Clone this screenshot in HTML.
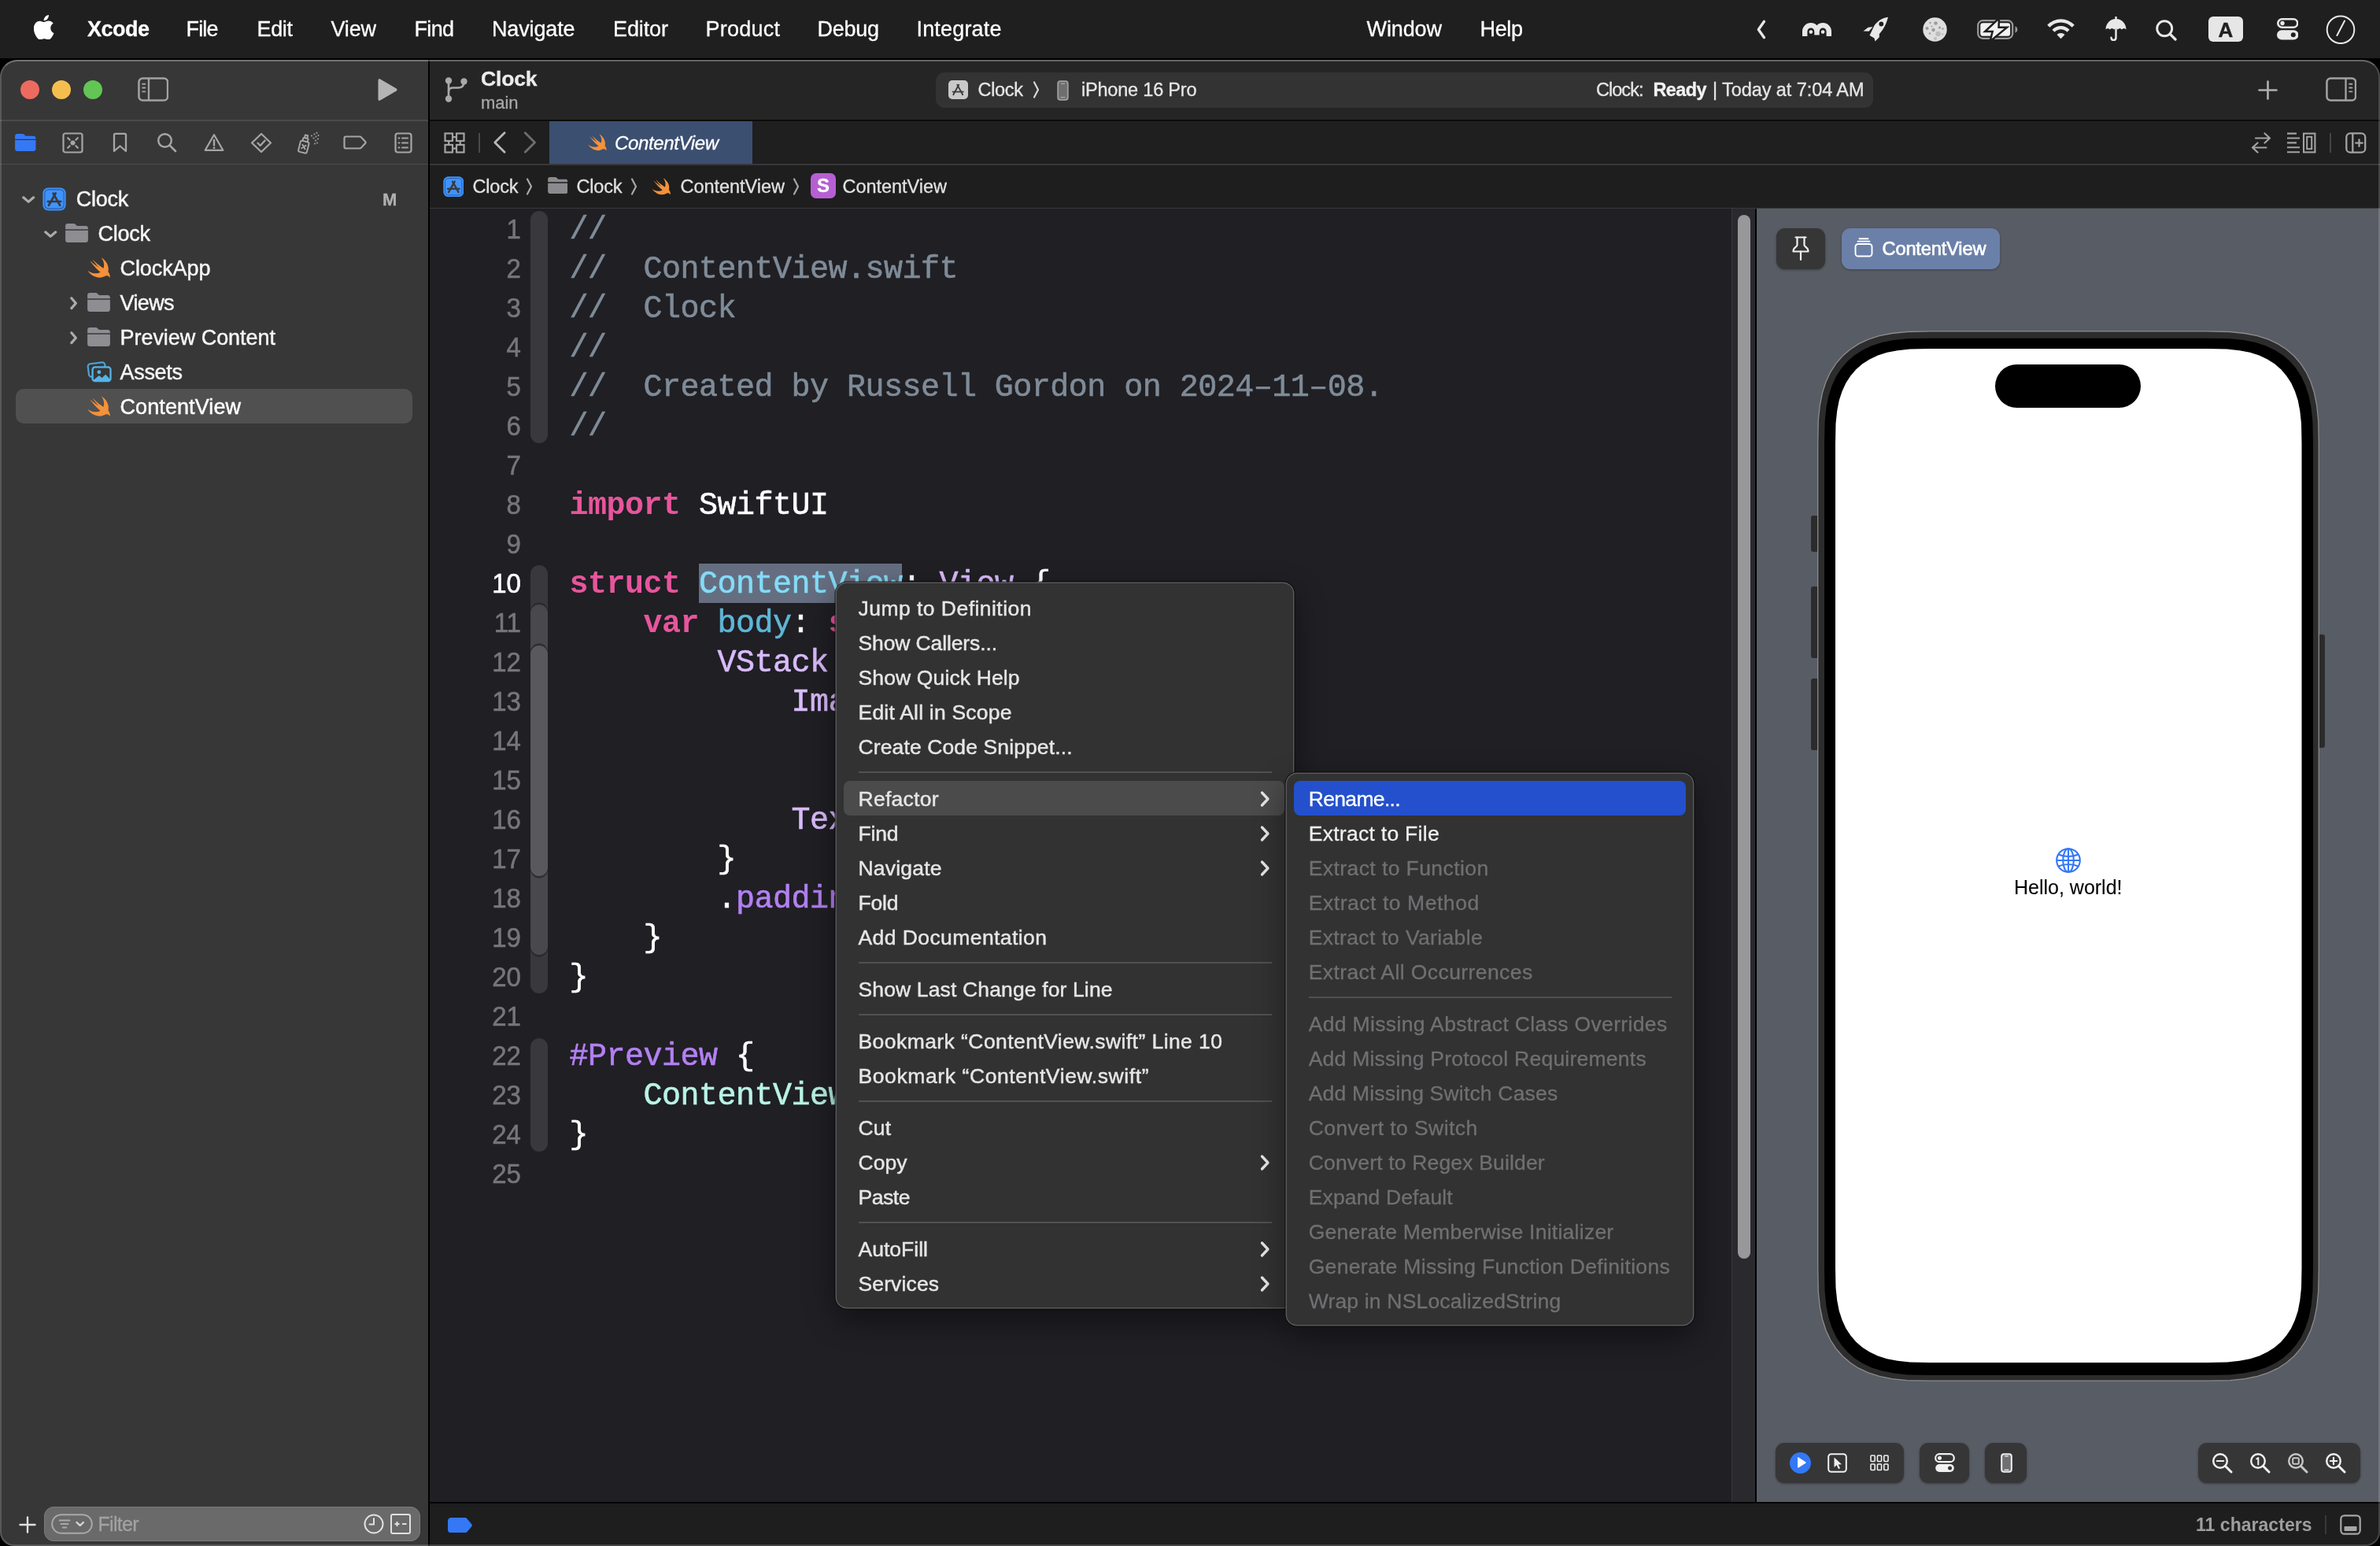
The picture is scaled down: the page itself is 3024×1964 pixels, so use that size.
<!DOCTYPE html>
<html><head><meta charset="utf-8"><title>Xcode</title>
<style>
html,body{margin:0;padding:0;}
body{width:3024px;height:1964px;background:#000;overflow:hidden;position:relative;font-family:"Liberation Sans",sans-serif;}
#win{position:absolute;left:0;top:76px;width:3024px;height:1888px;border-radius:22px 22px 18px 18px;overflow:hidden;background:#1f1f24;}
#win>.in{will-change:transform;position:absolute;left:0;top:-76px;width:3024px;height:1964px;}
#edge{position:absolute;left:0;top:76px;width:3024px;height:1888px;border-radius:22px 22px 18px 18px;box-sizing:border-box;border:2px solid rgba(255,255,255,.17);border-top:2px solid rgba(255,255,255,.30);pointer-events:none;}
#gs{position:absolute;left:0;top:0;width:3024px;height:1964px;will-change:transform;}
</style></head><body>
<div id="gs">
<div style="position:absolute;left:0.0px;top:0.0px;width:3024.0px;height:73.5px;background:#1f1f1f;"></div>
<svg style="position:absolute;left:43.2px;top:18.8px;" width="26.0" height="31.5" viewBox="2.5 0 19.5 24"><path d="M12.152 6.896c-.948 0-2.415-1.078-3.96-1.04-2.04.027-3.91 1.183-4.961 3.014-2.117 3.675-.546 9.103 1.519 12.09 1.013 1.454 2.208 3.09 3.792 3.039 1.52-.065 2.09-.987 3.935-.987 1.831 0 2.35.987 3.96.948 1.637-.026 2.676-1.48 3.676-2.948 1.156-1.688 1.636-3.325 1.662-3.415-.039-.013-3.182-1.221-3.22-4.857-.026-3.04 2.48-4.494 2.597-4.559-1.429-2.09-3.623-2.324-4.39-2.376-2-.156-3.675 1.09-4.61 1.09zM15.53 3.83c.843-1.012 1.4-2.427 1.245-3.83-1.207.052-2.662.805-3.532 1.818-.78.896-1.454 2.338-1.273 3.714 1.338.104 2.715-.688 3.559-1.701" fill="#fff"/></svg>
<div style="position:absolute;left:111.0px;top:18.5px;height:37px;line-height:37px;font-family:'Liberation Sans',sans-serif;font-size:27.00px;font-weight:700;color:#fff;white-space:pre;letter-spacing:-0.507px;-webkit-text-stroke:0.30px #fff;">Xcode</div>
<div style="position:absolute;left:236.5px;top:18.5px;height:37px;line-height:37px;font-family:'Liberation Sans',sans-serif;font-size:27.00px;font-weight:400;color:#fff;white-space:pre;letter-spacing:-0.835px;-webkit-text-stroke:0.30px #fff;">File</div>
<div style="position:absolute;left:326.5px;top:18.5px;height:37px;line-height:37px;font-family:'Liberation Sans',sans-serif;font-size:27.00px;font-weight:400;color:#fff;white-space:pre;letter-spacing:-0.342px;-webkit-text-stroke:0.30px #fff;">Edit</div>
<div style="position:absolute;left:420.5px;top:18.5px;height:37px;line-height:37px;font-family:'Liberation Sans',sans-serif;font-size:27.00px;font-weight:400;color:#fff;white-space:pre;letter-spacing:-0.178px;-webkit-text-stroke:0.30px #fff;">View</div>
<div style="position:absolute;left:526.5px;top:18.5px;height:37px;line-height:37px;font-family:'Liberation Sans',sans-serif;font-size:27.00px;font-weight:400;color:#fff;white-space:pre;letter-spacing:-0.675px;-webkit-text-stroke:0.30px #fff;">Find</div>
<div style="position:absolute;left:625.0px;top:18.5px;height:37px;line-height:37px;font-family:'Liberation Sans',sans-serif;font-size:27.00px;font-weight:400;color:#fff;white-space:pre;letter-spacing:-0.152px;-webkit-text-stroke:0.30px #fff;">Navigate</div>
<div style="position:absolute;left:779.0px;top:18.5px;height:37px;line-height:37px;font-family:'Liberation Sans',sans-serif;font-size:27.00px;font-weight:400;color:#fff;white-space:pre;letter-spacing:-0.107px;-webkit-text-stroke:0.30px #fff;">Editor</div>
<div style="position:absolute;left:896.5px;top:18.5px;height:37px;line-height:37px;font-family:'Liberation Sans',sans-serif;font-size:27.00px;font-weight:400;color:#fff;white-space:pre;letter-spacing:0.242px;-webkit-text-stroke:0.30px #fff;">Product</div>
<div style="position:absolute;left:1038.5px;top:18.5px;height:37px;line-height:37px;font-family:'Liberation Sans',sans-serif;font-size:27.00px;font-weight:400;color:#fff;white-space:pre;letter-spacing:-0.266px;-webkit-text-stroke:0.30px #fff;">Debug</div>
<div style="position:absolute;left:1164.5px;top:18.5px;height:37px;line-height:37px;font-family:'Liberation Sans',sans-serif;font-size:27.00px;font-weight:400;color:#fff;white-space:pre;letter-spacing:0.178px;-webkit-text-stroke:0.30px #fff;">Integrate</div>
<div style="position:absolute;left:1736.5px;top:18.5px;height:37px;line-height:37px;font-family:'Liberation Sans',sans-serif;font-size:27.00px;font-weight:400;color:#fff;white-space:pre;letter-spacing:-0.106px;-webkit-text-stroke:0.30px #fff;">Window</div>
<div style="position:absolute;left:1880.5px;top:18.5px;height:37px;line-height:37px;font-family:'Liberation Sans',sans-serif;font-size:27.00px;font-weight:400;color:#fff;white-space:pre;letter-spacing:-0.343px;-webkit-text-stroke:0.30px #fff;">Help</div>
<svg style="position:absolute;left:2231.0px;top:24.5px;" width="14.0" height="25.0" viewBox="0 0 14 25"><path d="M10.500 2.300 3.300 12.500 10.500 22.700" fill="none" stroke="#e8e8e8" stroke-width="3.300" stroke-linecap="round" stroke-linejoin="round"/></svg>
<svg style="position:absolute;left:2289.5px;top:28.5px;" width="37.0" height="17.0" viewBox="0 0 37 17"><g fill="none" stroke="#e8e8e8" stroke-width="6.400"><path d="M3.200 17V10.900a7.650 7.650 0 0 1 15.300 0V15.500"/><path d="M18.500 10.900a7.650 7.650 0 0 1 15.300 0V17"/></g><circle cx="10.900" cy="11.600" r="2.300" fill="#e8e8e8"/><circle cx="26.100" cy="11.600" r="2.300" fill="#e8e8e8"/></svg>
<svg style="position:absolute;left:2367.0px;top:21.0px;" width="33.0" height="32.0" viewBox="0 0 33 32"><path d="M32 .800C24.500 1.800 18.800 5.500 14.500 11.500L8.500 24l6 3.500C22 22 28.500 14.500 32 .800z" fill="#e8e8e8"/><path d="M12.500 13.200 6.800 13.800.500 18.500l7 .300z" fill="#e8e8e8"/><path d="M17.500 24.200 20.800 21v5.200l-5.300 5.300-1.200-4.800z" fill="#e8e8e8"/><circle cx="23.300" cy="9.500" r="2.900" fill="#1f1f1f"/></svg>
<svg style="position:absolute;left:2442.5px;top:22.0px;" width="31.0" height="31.0" viewBox="0 0 31 31"><circle cx="15.500" cy="15.500" r="15.200" fill="#dedede"/><g fill="#9c9c9c"><circle cx="16.500" cy="7.500" r="2.300"/><circle cx="9.500" cy="7" r="1.200"/><circle cx="5.500" cy="14" r="2"/><circle cx="13.500" cy="16" r="2.200"/><circle cx="21.500" cy="13" r="1.600"/><circle cx="25.500" cy="14.500" r="1.200"/><circle cx="9" cy="20.500" r="1.200"/><circle cx="11.500" cy="11.500" r="1"/></g><g fill="#bdbdbd"><circle cx="19.500" cy="21" r="3.200"/><circle cx="16" cy="27" r="2"/><circle cx="25" cy="21.500" r="1.200"/></g></svg>
<svg style="position:absolute;left:2511.5px;top:24.5px;" width="53.0" height="25.0" viewBox="0 0 53 25"><rect x="1.200" y="1.200" width="44" height="22.600" rx="6" fill="none" stroke="#9a9a9a" stroke-width="2.200"/><rect x="4.300" y="4.300" width="37.800" height="16.400" rx="3" fill="#f2f2f2"/><path d="M48.500 8.300c1.800.700 2.800 2.200 2.800 4.200s-1 3.500-2.800 4.200z" fill="#9a9a9a"/><path d="M26.600 1.200 13.300 13.700H21.300L18.600 24.200 34.700 10.900H26.300z" fill="#f2f2f2" stroke="#1f1f1f" stroke-width="5" stroke-linejoin="miter" paint-order="stroke"/></svg>
<svg style="position:absolute;left:2600.5px;top:24.0px;" width="35.0" height="25.5" viewBox="0 0 35 25.500"><g fill="none" stroke="#e8e8e8" stroke-width="4.300"><path d="M1.800 9.300C6 4.800 11.500 2.300 17.500 2.300s11.500 2.500 15.700 7"/><path d="M8 15.300c2.500-2.700 5.800-4.200 9.500-4.200s7 1.500 9.500 4.200"/></g><path d="M17.500 25.300l-5-5.200c1.300-1.400 3-2.200 5-2.200s3.700.800 5 2.200z" fill="#e8e8e8"/></svg>
<svg style="position:absolute;left:2674.5px;top:20.5px;" width="27.0" height="31.5" viewBox="0 0 27 31.500"><path d="M13.500 .800v3" stroke="#e8e8e8" stroke-width="2.400" stroke-linecap="round"/><path d="M.500 16.500C.500 9 6 3 13.500 3s13 6 13 13.500c-1.700-2-3.800-2-5.500 0-1.600-2-3.600-2-5.200 0-1.600-2.100-3.200-2.100-4.800 0-1.600-2-3.600-2-5.200 0-1.600-2-3.600-2-5.300 0z" fill="#e8e8e8"/><path d="M13.500 14v12.500c0 2-1.200 3.500-3 3.500s-3-1.300-3-3.200" fill="none" stroke="#e8e8e8" stroke-width="2.400" stroke-linecap="round"/></svg>
<svg style="position:absolute;left:2738.5px;top:24.5px;" width="27.0" height="27.0" viewBox="0 0 27 27"><circle cx="11.200" cy="11.200" r="9.500" fill="none" stroke="#e8e8e8" stroke-width="2.900"/><path d="M18.300 18.300 25 25" stroke="#e8e8e8" stroke-width="3.300" stroke-linecap="round"/></svg>
<div style="position:absolute;left:2806.0px;top:21.0px;width:44.0px;height:32.0px;background:#e6e6e6;border-radius:6px;"></div>
<div style="position:absolute;left:2806.0px;top:19.5px;height:36px;line-height:36px;font-family:'Liberation Sans',sans-serif;font-size:26.00px;font-weight:700;color:#1f1f1f;white-space:pre;-webkit-text-stroke:0.40px #1f1f1f;width:44px;text-align:center;">A</div>
<svg style="position:absolute;left:2892.5px;top:23.0px;" width="27.5" height="27.5" viewBox="0 0 27.500 27.500"><rect x="1.300" y="1.300" width="24.900" height="10.400" rx="5.200" fill="none" stroke="#e8e8e8" stroke-width="2.600"/><circle cx="7" cy="6.500" r="2.700" fill="#e8e8e8"/><rect x="0" y="15.200" width="27.500" height="12.300" rx="6.150" fill="#e8e8e8"/><circle cx="20.800" cy="21.350" r="3" fill="#1f1f1f"/></svg>
<svg style="position:absolute;left:2955.0px;top:18.5px;" width="38.0" height="37.5" viewBox="0 0 38 37.500"><circle cx="19" cy="18.750" r="17.300" fill="none" stroke="#e8e8e8" stroke-width="2"/><path d="M24 7.500 14.400 26" stroke="#e8e8e8" stroke-width="2" stroke-linecap="round"/></svg>
</div>
<div id="win"><div class="in">
<div style="position:absolute;left:0.0px;top:76.0px;width:545.0px;height:1888.0px;background:#373737;"></div>
<div style="position:absolute;left:546.0px;top:76.0px;width:2478.0px;height:77.0px;background:#252525;"></div>
<div style="position:absolute;left:544.0px;top:76.0px;width:2.0px;height:1888.0px;background:#000;"></div>
<div style="position:absolute;left:546.0px;top:152.0px;width:2478.0px;height:2.0px;background:#0c0c0c;"></div>
<div style="position:absolute;left:0.0px;top:152.0px;width:544.0px;height:1.5px;background:#4b4b4b;"></div>
<div style="position:absolute;left:0.0px;top:207.5px;width:544.0px;height:1.5px;background:#4b4b4b;"></div>
<div style="position:absolute;left:26.0px;top:102.0px;width:24.0px;height:24.0px;background:#ed6a5e;border-radius:50%;"></div>
<div style="position:absolute;left:66.0px;top:102.0px;width:24.0px;height:24.0px;background:#f4be4f;border-radius:50%;"></div>
<div style="position:absolute;left:106.0px;top:102.0px;width:24.0px;height:24.0px;background:#62c554;border-radius:50%;"></div>
<svg style="position:absolute;left:174.5px;top:97.5px;" width="39.5" height="31.0" viewBox="0 0 41 32"><rect x="1.5" y="1.5" width="38" height="29" rx="5" fill="none" stroke="#a3a3a3" stroke-width="2.6"/><path d="M14.5 2v28" stroke="#a3a3a3" stroke-width="2.4"/><path d="M5.500 9h5M5.500 14h5M5.500 19h5" stroke="#a3a3a3" stroke-width="2" /></svg>
<svg style="position:absolute;left:478.0px;top:99.0px;" width="29.0" height="30.0" viewBox="0 0 29 30"><path d="M2.500 2.800v24.400c0 1.400 1.400 2.100 2.600 1.400l20.600-12.200c1.100-.7 1.100-2.100 0-2.800L5.100 1.400C3.900.7 2.500 1.400 2.500 2.800z" fill="#b4b4b4"/></svg>
<svg style="position:absolute;left:564.0px;top:96.0px;" width="32.0" height="36.0" viewBox="0 0 32 36"><g fill="none" stroke="#a9a9a9" stroke-width="2.600" stroke-linecap="round"><path d="M6 8v20"/><path d="M6 20c0-3 2-4.500 6-4.500h6c4 0 7-2 7-6"/></g><circle cx="6" cy="6.500" r="4.200" fill="#a9a9a9"/><circle cx="6" cy="29.500" r="4.200" fill="#a9a9a9"/><circle cx="25.500" cy="7.500" r="4.200" fill="#a9a9a9"/></svg>
<div style="position:absolute;left:611.0px;top:82.0px;height:37px;line-height:37px;font-family:'Liberation Sans',sans-serif;font-size:26.50px;font-weight:700;color:#ececec;white-space:pre;letter-spacing:-0.166px;-webkit-text-stroke:0.30px #ececec;">Clock</div>
<div style="position:absolute;left:611.0px;top:115.5px;height:30px;line-height:30px;font-family:'Liberation Sans',sans-serif;font-size:22.00px;font-weight:400;color:#a8a8a8;white-space:pre;letter-spacing:-0.062px;-webkit-text-stroke:0.30px #a8a8a8;">main</div>
<div style="position:absolute;left:1189.0px;top:92.0px;width:1191.0px;height:44.5px;background:#333334;border-radius:11px;"></div>
<div style="position:absolute;left:1205.0px;top:101.5px;width:24.5px;height:24.5px;background:#c9c9c9;border-radius:5px;"></div>
<svg style="position:absolute;left:1205.0px;top:101.5px;" width="24.5" height="24.5" viewBox="0 0 24 24"><g stroke="#3a3a3a" stroke-width="1.800" stroke-linecap="round" fill="none"><path d="M12.900 5.600 7.200 16"/><path d="M11.100 5.600 16.800 16"/><path d="M5.600 14.300h12.800"/><path d="M6.200 17.800l.8-1.400"/><path d="M17.800 17.800l-.8-1.400"/></g></svg>
<div style="position:absolute;left:1242.5px;top:98.0px;height:32px;line-height:32px;font-family:'Liberation Sans',sans-serif;font-size:23.50px;font-weight:400;color:#e6e6e6;white-space:pre;letter-spacing:-0.315px;-webkit-text-stroke:0.30px #e6e6e6;">Clock</div>
<svg style="position:absolute;left:1312.0px;top:102.0px;" width="9.0" height="24.0" viewBox="0 0 9 24"><path d="M2 2.500 7 12 2 21.500" fill="none" stroke="#d8d8d8" stroke-width="2.200" stroke-linecap="round" stroke-linejoin="round"/></svg>
<svg style="position:absolute;left:1342.7px;top:101.5px;" width="15.0" height="26.0" viewBox="0 0 15 26"><rect x="1.200" y="1.200" width="12.600" height="23.600" rx="3" fill="#6e6e6e" stroke="#a0a0a0" stroke-width="1.800"/><path d="M5.500 4.300h4M5 21.700h5" stroke="#a8a8a8" stroke-width="1.300" stroke-linecap="round"/></svg>
<div style="position:absolute;left:1374.0px;top:98.0px;height:32px;line-height:32px;font-family:'Liberation Sans',sans-serif;font-size:23.50px;font-weight:400;color:#e6e6e6;white-space:pre;letter-spacing:-0.203px;-webkit-text-stroke:0.30px #e6e6e6;">iPhone 16 Pro</div>
<div style="position:absolute;left:2028.0px;top:98.0px;height:32px;line-height:32px;font-family:'Liberation Sans',sans-serif;font-size:23.50px;font-weight:400;color:#e6e6e6;white-space:pre;letter-spacing:-0.970px;-webkit-text-stroke:0.30px #e6e6e6;">Clock: </div>
<div style="position:absolute;left:2100.5px;top:98.0px;height:32px;line-height:32px;font-family:'Liberation Sans',sans-serif;font-size:23.50px;font-weight:700;color:#f2f2f2;white-space:pre;letter-spacing:-0.634px;-webkit-text-stroke:0.30px #f2f2f2;">Ready</div>
<div style="position:absolute;left:2176.0px;top:98.0px;height:32px;line-height:32px;font-family:'Liberation Sans',sans-serif;font-size:23.50px;font-weight:400;color:#e6e6e6;white-space:pre;letter-spacing:-0.076px;-webkit-text-stroke:0.30px #e6e6e6;">| Today at 7:04 AM</div>
<svg style="position:absolute;left:2869.0px;top:101.5px;" width="25.0" height="25.0" viewBox="0 0 25 25"><path d="M12.500 1.500v22M1.500 12.500h22" stroke="#b0b0b0" stroke-width="2.600" stroke-linecap="round"/></svg>
<svg style="position:absolute;left:2954.5px;top:97.5px;" width="39.5" height="31.0" viewBox="0 0 41 32"><rect x="1.500" y="1.500" width="38" height="29" rx="5" fill="none" stroke="#a3a3a3" stroke-width="2.600"/><path d="M26.500 2v28" stroke="#a3a3a3" stroke-width="2.400"/><path d="M30.500 9h5M30.500 14h5M30.500 19h5" stroke="#a3a3a3" stroke-width="2"/></svg>
<div style="position:absolute;left:546.0px;top:154.0px;width:2478.0px;height:54.0px;background:#1f1f1f;"></div>
<div style="position:absolute;left:546.0px;top:208.0px;width:2478.0px;height:2.0px;background:#38383a;"></div>
<div style="position:absolute;left:698.0px;top:154.0px;width:258.0px;height:54.0px;background:#3b4f70;"></div>
<svg style="position:absolute;left:747.0px;top:169.5px;" width="24.0" height="22.0" viewBox="2.3 3.2 18.6 16.9"><defs><linearGradient id="sg5398" x1="0" y1="0" x2="0" y2="1"><stop offset="0" stop-color="#f8a34a"/><stop offset="1" stop-color="#f58a33"/></linearGradient></defs><path d="M13.543 3.41c4.114 2.47 6.545 7.162 5.549 11.131-.024.093-.05.181-.076.272l.002.001c2.062 2.538 1.5 5.258 1.236 4.745-1.072-2.086-3.066-1.568-4.088-1.043a6.803 6.803 0 0 1-.281.158l-.02.012-.002.002c-2.115 1.123-4.957 1.205-7.812-.022a12.568 12.568 0 0 1-5.64-4.838c.649.48 1.35.902 2.097 1.252 3.019 1.414 6.051 1.311 8.197-.002C9.651 12.73 7.101 9.67 5.146 7.191a10.628 10.628 0 0 1-1.005-1.384c2.34 2.142 6.038 4.83 7.365 5.576C8.69 8.408 6.208 4.743 6.324 4.86c4.436 4.47 8.528 6.996 8.528 6.996.154.085.27.154.36.213.085-.215.16-.437.224-.668.708-2.588-.09-5.548-1.893-7.992z" fill="#f5913a"/></svg>
<div style="position:absolute;left:781.0px;top:164.5px;height:33px;line-height:33px;font-family:'Liberation Sans',sans-serif;font-size:24.00px;font-weight:400;font-style:italic;color:#fff;white-space:pre;letter-spacing:-0.365px;-webkit-text-stroke:0.30px #fff;">ContentView</div>
<svg style="position:absolute;left:563.5px;top:168.0px;" width="27.0" height="27.0" viewBox="0 0 27 27"><g fill="none" stroke="#a3a3a3" stroke-width="2.200"><rect x="1.500" y="1.500" width="9.500" height="9.500"/><rect x="16" y="1.500" width="9.500" height="9.500"/><rect x="1.500" y="16" width="9.500" height="9.500"/><rect x="16" y="16" width="9.500" height="9.500"/><path d="M11 6.200h5M6.200 11v5M20.700 11v5M11 20.700h5"/></g></svg>
<div style="position:absolute;left:608.0px;top:169.0px;width:1.5px;height:25.0px;background:#4a4a4a;"></div>
<svg style="position:absolute;left:624.5px;top:166.3px;" width="19.3" height="30.0" viewBox="0 0 18 28"><path d="M15 2.500 3.500 14 15 25.500" fill="none" stroke="#b8b8b8" stroke-width="2.600" stroke-linecap="round" stroke-linejoin="round"/></svg>
<svg style="position:absolute;left:664.0px;top:166.3px;" width="19.3" height="30.0" viewBox="0 0 18 28"><path d="M3 2.500 14.500 14 3 25.500" fill="none" stroke="#6e6e6e" stroke-width="2.600" stroke-linecap="round" stroke-linejoin="round"/></svg>
<svg style="position:absolute;left:2859.5px;top:167.5px;" width="26.0" height="27.0" viewBox="0 0 26 27"><g fill="none" stroke="#a3a3a3" stroke-width="2.200" stroke-linecap="round" stroke-linejoin="round"><path d="M6 7.500h18M17.500 1.500l6.500 6-6.500 6"/><path d="M19.500 19.500H2M8.500 13.500l-6.500 6 6.500 6"/></g></svg>
<svg style="position:absolute;left:2906.0px;top:167.5px;" width="36.5" height="27.0" viewBox="0 0 36.500 27"><g fill="none" stroke="#a3a3a3" stroke-width="2.100"><path d="M0 1.600h12M0 7.500h16M0 13.400h12M0 19.300h16M0 25.200h16"/><rect x="21" y="1.600" width="14.400" height="23.800"/><rect x="25.200" y="5.800" width="6" height="15.400" stroke-width="2"/></g></svg>
<div style="position:absolute;left:2960.0px;top:169.0px;width:1.5px;height:25.0px;background:#454545;"></div>
<svg style="position:absolute;left:2980.0px;top:167.5px;" width="26.5" height="27.0" viewBox="0 0 26.500 27"><g fill="none" stroke="#a3a3a3" stroke-width="2.300" stroke-linecap="round"><rect x="1.300" y="1.300" width="23.900" height="24.400" rx="5"/><path d="M9.300 1.500v24" stroke-linecap="butt"/><path d="M17.500 9.300v8.600M13.200 13.600h8.600"/></g></svg>
<div style="position:absolute;left:546.0px;top:210.0px;width:2478.0px;height:53.5px;background:#1e1e1e;"></div>
<div style="position:absolute;left:546.0px;top:263.5px;width:2478.0px;height:1.7px;background:#38383a;"></div>
<svg style="position:absolute;left:562.5px;top:223.5px;" width="26.5" height="26.5" viewBox="0 0 24 24"><rect x="0.300" y="0.300" width="23.400" height="23.400" rx="5.600" fill="#3f93fb"/><rect x="2.300" y="2.300" width="19.400" height="19.400" rx="3.800" fill="none" stroke="#2a5fae" stroke-width="0.900"/><g stroke="#3a3a3c" stroke-width="2.100" stroke-linecap="round" fill="none"><path d="M13.300 6 7.600 16.200"/><path d="M10.900 6.200 16.600 16.200"/><path d="M5.400 14.400h13.200"/><path d="M6.300 18.200l.700-1.200"/><path d="M17.700 18.200l-.700-1.200"/></g></svg>
<div style="position:absolute;left:600.5px;top:220.5px;height:32px;line-height:32px;font-family:'Liberation Sans',sans-serif;font-size:23.50px;font-weight:400;color:#e0e0e0;white-space:pre;letter-spacing:-0.190px;-webkit-text-stroke:0.30px #e0e0e0;">Clock</div>
<svg style="position:absolute;left:668.0px;top:225.0px;" width="9.0" height="24.0" viewBox="0 0 9 24"><path d="M2 2.500 7 12 2 21.500" fill="none" stroke="#a8a8a8" stroke-width="2.200" stroke-linecap="round" stroke-linejoin="round"/></svg>
<svg style="position:absolute;left:695.5px;top:225.0px;" width="25.5" height="21.0" viewBox="1.5 2 21 17.5"><path d="M1.5 4.2C1.5 2.9 2.4 2 3.7 2h5.2c.9 0 1.5.3 2.1.9l.9.9c.3.3.7.4 1.1.4h7.3c1.3 0 2.2.9 2.2 2.2v.9H1.5z" fill="#8b8b8f"/><path d="M1.5 8.4h21v8.9c0 1.3-.9 2.2-2.2 2.2H3.7c-1.3 0-2.2-.9-2.2-2.2z" fill="#8b8b8f"/></svg>
<div style="position:absolute;left:732.5px;top:220.5px;height:32px;line-height:32px;font-family:'Liberation Sans',sans-serif;font-size:23.50px;font-weight:400;color:#e0e0e0;white-space:pre;letter-spacing:-0.190px;-webkit-text-stroke:0.30px #e0e0e0;">Clock</div>
<svg style="position:absolute;left:801.0px;top:225.0px;" width="9.0" height="24.0" viewBox="0 0 9 24"><path d="M2 2.500 7 12 2 21.500" fill="none" stroke="#a8a8a8" stroke-width="2.200" stroke-linecap="round" stroke-linejoin="round"/></svg>
<svg style="position:absolute;left:828.0px;top:225.5px;" width="24.5" height="22.0" viewBox="2.3 3.2 18.6 16.9"><defs><linearGradient id="sg6021" x1="0" y1="0" x2="0" y2="1"><stop offset="0" stop-color="#f8a34a"/><stop offset="1" stop-color="#f58a33"/></linearGradient></defs><path d="M13.543 3.41c4.114 2.47 6.545 7.162 5.549 11.131-.024.093-.05.181-.076.272l.002.001c2.062 2.538 1.5 5.258 1.236 4.745-1.072-2.086-3.066-1.568-4.088-1.043a6.803 6.803 0 0 1-.281.158l-.02.012-.002.002c-2.115 1.123-4.957 1.205-7.812-.022a12.568 12.568 0 0 1-5.64-4.838c.649.48 1.35.902 2.097 1.252 3.019 1.414 6.051 1.311 8.197-.002C9.651 12.73 7.101 9.67 5.146 7.191a10.628 10.628 0 0 1-1.005-1.384c2.34 2.142 6.038 4.83 7.365 5.576C8.69 8.408 6.208 4.743 6.324 4.86c4.436 4.47 8.528 6.996 8.528 6.996.154.085.27.154.36.213.085-.215.16-.437.224-.668.708-2.588-.09-5.548-1.893-7.992z" fill="#f5913a"/></svg>
<div style="position:absolute;left:864.5px;top:220.5px;height:32px;line-height:32px;font-family:'Liberation Sans',sans-serif;font-size:23.50px;font-weight:400;color:#e0e0e0;white-space:pre;letter-spacing:-0.032px;-webkit-text-stroke:0.30px #e0e0e0;">ContentView</div>
<svg style="position:absolute;left:1007.0px;top:225.0px;" width="9.0" height="24.0" viewBox="0 0 9 24"><path d="M2 2.500 7 12 2 21.500" fill="none" stroke="#a8a8a8" stroke-width="2.200" stroke-linecap="round" stroke-linejoin="round"/></svg>
<div style="position:absolute;left:1030.0px;top:219.7px;width:32.0px;height:32.0px;background:#b65fd3;border-radius:7px;"></div>
<div style="position:absolute;left:1030.0px;top:219.3px;height:33px;line-height:33px;font-family:'Liberation Sans',sans-serif;font-size:24.00px;font-weight:700;color:#fff;white-space:pre;-webkit-text-stroke:0.30px #fff;width:32px;text-align:center;">S</div>
<div style="position:absolute;left:1070.5px;top:220.5px;height:32px;line-height:32px;font-family:'Liberation Sans',sans-serif;font-size:23.50px;font-weight:400;color:#e0e0e0;white-space:pre;letter-spacing:-0.032px;-webkit-text-stroke:0.30px #e0e0e0;">ContentView</div>
<svg style="position:absolute;left:19.0px;top:169.5px;" width="26.5" height="22.0" viewBox="1.5 2 21 17.5"><path d="M1.5 4.2C1.5 2.9 2.4 2 3.7 2h5.2c.9 0 1.5.3 2.1.9l.9.9c.3.3.7.4 1.1.4h7.3c1.3 0 2.2.9 2.2 2.2v.9H1.5z" fill="#3478f6"/><path d="M1.5 8.4h21v8.9c0 1.3-.9 2.2-2.2 2.2H3.7c-1.3 0-2.2-.9-2.2-2.2z" fill="#3478f6"/></svg>
<svg style="position:absolute;left:78.5px;top:167.5px;" width="27.0" height="27.0" viewBox="0 0 27 27"><g fill="none" stroke="#a6a6a6" stroke-width="2.200" stroke-linecap="round"><rect x="1.500" y="1.500" width="24" height="24" rx="2.500"/><path d="M7.200 7.200l2.500 2.500M19.800 7.200l-2.500 2.500M7.200 19.800l2.500-2.500M19.800 19.800l-2.500-2.500"/></g><circle cx="13.500" cy="13.500" r="3" fill="#a6a6a6"/></svg>
<svg style="position:absolute;left:142.5px;top:168.0px;" width="19.0" height="26.0" viewBox="0 0 19 26"><path d="M2 3.500c0-1 .7-1.700 1.700-1.700h11.600c1 0 1.700.7 1.700 1.700V24l-7.500-6.500L2 24z" fill="none" stroke="#a6a6a6" stroke-width="2.300" stroke-linejoin="round"/></svg>
<svg style="position:absolute;left:199.0px;top:168.0px;" width="26.0" height="26.0" viewBox="0 0 26 26"><circle cx="10.500" cy="10.500" r="8.300" fill="none" stroke="#a6a6a6" stroke-width="2.400"/><path d="M16.800 16.800 24 24" stroke="#a6a6a6" stroke-width="2.600" stroke-linecap="round"/></svg>
<svg style="position:absolute;left:259.0px;top:169.0px;" width="26.0" height="24.0" viewBox="0 0 26 24"><path d="M13 2.200 24.300 21.800H1.700z" fill="none" stroke="#a6a6a6" stroke-width="2.200" stroke-linejoin="round"/><path d="M13 9v6.500" stroke="#a6a6a6" stroke-width="2.400" stroke-linecap="round"/><circle cx="13" cy="18.800" r="1.400" fill="#a6a6a6"/></svg>
<svg style="position:absolute;left:318.0px;top:167.5px;" width="28.0" height="27.0" viewBox="0 0 28 27"><path d="M14 2 26 13.500 14 25 2 13.500z" fill="none" stroke="#a6a6a6" stroke-width="2.200" stroke-linejoin="round"/><path d="M9.500 13.800l3.200 3.200 6-6.500" fill="none" stroke="#a6a6a6" stroke-width="2.300" stroke-linecap="round" stroke-linejoin="round"/></svg>
<svg style="position:absolute;left:376.0px;top:166.5px;" width="32.0" height="29.0" viewBox="0 0 32 29"><g transform="rotate(14 10.500 17)" fill="none" stroke="#a6a6a6" stroke-width="2" stroke-linejoin="round"><rect x="5" y="12.500" width="11" height="14.500" rx="2"/><path d="M7.300 12.500V9.300c0-.600.400-1 1-1h4.400c.600 0 1 .400 1 1v3.200"/><path d="M8.800 8.300V4.500h3.400v3.800"/><path d="M8.300 17.300l4.400 4.600M12.700 17.300l-4.400 4.600" stroke-linecap="round"/></g><g fill="#a6a6a6"><circle cx="20" cy="5.500" r="1"/><circle cx="23.500" cy="3.500" r="1"/><circle cx="26.500" cy="1.800" r="1"/><circle cx="22.500" cy="8.500" r="1"/><circle cx="25.500" cy="6.500" r="1"/><circle cx="28.500" cy="5" r="1"/><circle cx="25" cy="11.500" r="1"/><circle cx="28" cy="9.500" r="1"/><circle cx="27" cy="14.500" r="1"/><circle cx="24" cy="15.500" r="1"/></g></svg>
<svg style="position:absolute;left:436.0px;top:172.0px;" width="30.0" height="18.0" viewBox="0 0 30 18"><path d="M3.500 1.500h17.500c.8 0 1.500.3 2 .9l5.200 5.700c.5.500.5 1.300 0 1.800l-5.200 5.700c-.5.600-1.200.9-2 .9H3.500c-1.100 0-2-.9-2-2v-11c0-1.100.9-2 2-2z" fill="none" stroke="#a6a6a6" stroke-width="2.200"/></svg>
<svg style="position:absolute;left:500.5px;top:167.5px;" width="23.0" height="27.0" viewBox="0 0 23 27"><rect x="1.500" y="1.500" width="20" height="24" rx="3" fill="none" stroke="#a6a6a6" stroke-width="2.200"/><g stroke="#a6a6a6" stroke-width="2" stroke-linecap="round"><path d="M10 7.500h7M10 13.500h7M10 19.500h7"/><path d="M5.500 7.500h1M5.500 13.500h1M5.500 19.500h1"/></g></svg>
<div style="position:absolute;left:20.0px;top:493.9px;width:504.0px;height:44.0px;background:#505050;border-radius:10px;"></div>
<svg style="position:absolute;left:26.8px;top:249.1px;" width="18.4" height="9.2" viewBox="0 0 20 10"><path d="M3 2l7 6 7-6" fill="none" stroke="#ababab" stroke-width="3.4782608695652177" stroke-linecap="round" stroke-linejoin="round"/></svg>
<svg style="position:absolute;left:54.0px;top:237.7px;" width="30.0" height="30.0" viewBox="0 0 24 24"><rect x="0.300" y="0.300" width="23.400" height="23.400" rx="5.600" fill="#3f93fb"/><rect x="2.300" y="2.300" width="19.400" height="19.400" rx="3.800" fill="none" stroke="#2a5fae" stroke-width="0.900"/><g stroke="#3a3a3c" stroke-width="2.100" stroke-linecap="round" fill="none"><path d="M13.300 6 7.600 16.200"/><path d="M10.900 6.200 16.600 16.200"/><path d="M5.400 14.400h13.200"/><path d="M6.300 18.200l.700-1.200"/><path d="M17.700 18.200l-.700-1.200"/></g></svg>
<div style="position:absolute;left:96.8px;top:234.8px;height:37px;line-height:37px;font-family:'Liberation Sans',sans-serif;font-size:27.00px;font-weight:400;color:#f6f6f6;white-space:pre;letter-spacing:-0.253px;-webkit-text-stroke:0.45px #f6f6f6;">Clock</div>
<div style="position:absolute;left:486.0px;top:238.7px;height:30px;line-height:30px;font-family:'Liberation Sans',sans-serif;font-size:22.00px;font-weight:700;color:#b0b0b0;white-space:pre;letter-spacing:-0.326px;-webkit-text-stroke:0.30px #b0b0b0;">M</div>
<svg style="position:absolute;left:54.8px;top:293.2px;" width="18.4" height="9.2" viewBox="0 0 20 10"><path d="M3 2l7 6 7-6" fill="none" stroke="#ababab" stroke-width="3.4782608695652177" stroke-linecap="round" stroke-linejoin="round"/></svg>
<svg style="position:absolute;left:83.0px;top:284.3px;" width="29.0" height="24.0" viewBox="1.5 2 21 17.5"><path d="M1.5 4.2C1.5 2.9 2.4 2 3.7 2h5.2c.9 0 1.5.3 2.1.9l.9.9c.3.3.7.4 1.1.4h7.3c1.3 0 2.2.9 2.2 2.2v.9H1.5z" fill="#8e8e92"/><path d="M1.5 8.4h21v8.9c0 1.3-.9 2.2-2.2 2.2H3.7c-1.3 0-2.2-.9-2.2-2.2z" fill="#8e8e92"/></svg>
<div style="position:absolute;left:124.5px;top:278.9px;height:37px;line-height:37px;font-family:'Liberation Sans',sans-serif;font-size:27.00px;font-weight:400;color:#f6f6f6;white-space:pre;letter-spacing:-0.253px;-webkit-text-stroke:0.45px #f6f6f6;">Clock</div>
<svg style="position:absolute;left:111.0px;top:327.3px;" width="29.5" height="26.5" viewBox="2.3 3.2 18.6 16.9"><defs><linearGradient id="sg1104" x1="0" y1="0" x2="0" y2="1"><stop offset="0" stop-color="#f8a34a"/><stop offset="1" stop-color="#f58a33"/></linearGradient></defs><path d="M13.543 3.41c4.114 2.47 6.545 7.162 5.549 11.131-.024.093-.05.181-.076.272l.002.001c2.062 2.538 1.5 5.258 1.236 4.745-1.072-2.086-3.066-1.568-4.088-1.043a6.803 6.803 0 0 1-.281.158l-.02.012-.002.002c-2.115 1.123-4.957 1.205-7.812-.022a12.568 12.568 0 0 1-5.64-4.838c.649.48 1.35.902 2.097 1.252 3.019 1.414 6.051 1.311 8.197-.002C9.651 12.73 7.101 9.67 5.146 7.191a10.628 10.628 0 0 1-1.005-1.384c2.34 2.142 6.038 4.83 7.365 5.576C8.69 8.408 6.208 4.743 6.324 4.86c4.436 4.47 8.528 6.996 8.528 6.996.154.085.27.154.36.213.085-.215.16-.437.224-.668.708-2.588-.09-5.548-1.893-7.992z" fill="#f5913a"/></svg>
<div style="position:absolute;left:152.5px;top:322.9px;height:37px;line-height:37px;font-family:'Liberation Sans',sans-serif;font-size:27.00px;font-weight:400;color:#f6f6f6;white-space:pre;letter-spacing:-0.079px;-webkit-text-stroke:0.45px #f6f6f6;">ClockApp</div>
<svg style="position:absolute;left:89.4px;top:375.6px;" width="9.2" height="18.4" viewBox="0 0 10 20"><path d="M2 3l6 7-6 7" fill="none" stroke="#ababab" stroke-width="3.4782608695652177" stroke-linecap="round" stroke-linejoin="round"/></svg>
<svg style="position:absolute;left:111.0px;top:372.3px;" width="29.0" height="24.0" viewBox="1.5 2 21 17.5"><path d="M1.5 4.2C1.5 2.9 2.4 2 3.7 2h5.2c.9 0 1.5.3 2.1.9l.9.9c.3.3.7.4 1.1.4h7.3c1.3 0 2.2.9 2.2 2.2v.9H1.5z" fill="#8e8e92"/><path d="M1.5 8.4h21v8.9c0 1.3-.9 2.2-2.2 2.2H3.7c-1.3 0-2.2-.9-2.2-2.2z" fill="#8e8e92"/></svg>
<div style="position:absolute;left:152.5px;top:366.9px;height:37px;line-height:37px;font-family:'Liberation Sans',sans-serif;font-size:27.00px;font-weight:400;color:#f6f6f6;white-space:pre;letter-spacing:-0.634px;-webkit-text-stroke:0.45px #f6f6f6;">Views</div>
<svg style="position:absolute;left:89.4px;top:419.6px;" width="9.2" height="18.4" viewBox="0 0 10 20"><path d="M2 3l6 7-6 7" fill="none" stroke="#ababab" stroke-width="3.4782608695652177" stroke-linecap="round" stroke-linejoin="round"/></svg>
<svg style="position:absolute;left:111.0px;top:416.3px;" width="29.0" height="24.0" viewBox="1.5 2 21 17.5"><path d="M1.5 4.2C1.5 2.9 2.4 2 3.7 2h5.2c.9 0 1.5.3 2.1.9l.9.9c.3.3.7.4 1.1.4h7.3c1.3 0 2.2.9 2.2 2.2v.9H1.5z" fill="#8e8e92"/><path d="M1.5 8.4h21v8.9c0 1.3-.9 2.2-2.2 2.2H3.7c-1.3 0-2.2-.9-2.2-2.2z" fill="#8e8e92"/></svg>
<div style="position:absolute;left:152.5px;top:410.9px;height:37px;line-height:37px;font-family:'Liberation Sans',sans-serif;font-size:27.00px;font-weight:400;color:#f6f6f6;white-space:pre;letter-spacing:-0.043px;-webkit-text-stroke:0.45px #f6f6f6;">Preview Content</div>
<svg style="position:absolute;left:109.5px;top:458.4px;" width="33.0" height="28.0" viewBox="0 0 25 22"><rect x="1.300" y="2.500" width="17" height="13" rx="2.500" fill="none" stroke="#4aa3d8" stroke-width="1.700" transform="rotate(-7 10 9)"/><rect x="5.500" y="6.500" width="18" height="14" rx="2.500" fill="#373737" stroke="#55b4e6" stroke-width="1.800"/><circle cx="12" cy="11.500" r="1.900" fill="#55b4e6"/><path d="M6.500 19.500l5.500-4.500 3 2.300 3.500-3.300 4 4v1.500c0 .600-.400 1-1 1H7.500c-.600 0-1-.400-1-1z" fill="#55b4e6"/></svg>
<div style="position:absolute;left:152.5px;top:455.0px;height:37px;line-height:37px;font-family:'Liberation Sans',sans-serif;font-size:27.00px;font-weight:400;color:#f6f6f6;white-space:pre;letter-spacing:-0.305px;-webkit-text-stroke:0.45px #f6f6f6;">Assets</div>
<svg style="position:absolute;left:111.0px;top:503.4px;" width="29.5" height="26.5" viewBox="2.3 3.2 18.6 16.9"><defs><linearGradient id="sg1280" x1="0" y1="0" x2="0" y2="1"><stop offset="0" stop-color="#f8a34a"/><stop offset="1" stop-color="#f58a33"/></linearGradient></defs><path d="M13.543 3.41c4.114 2.47 6.545 7.162 5.549 11.131-.024.093-.05.181-.076.272l.002.001c2.062 2.538 1.5 5.258 1.236 4.745-1.072-2.086-3.066-1.568-4.088-1.043a6.803 6.803 0 0 1-.281.158l-.02.012-.002.002c-2.115 1.123-4.957 1.205-7.812-.022a12.568 12.568 0 0 1-5.64-4.838c.649.48 1.35.902 2.097 1.252 3.019 1.414 6.051 1.311 8.197-.002C9.651 12.73 7.101 9.67 5.146 7.191a10.628 10.628 0 0 1-1.005-1.384c2.34 2.142 6.038 4.83 7.365 5.576C8.69 8.408 6.208 4.743 6.324 4.86c4.436 4.47 8.528 6.996 8.528 6.996.154.085.27.154.36.213.085-.215.16-.437.224-.668.708-2.588-.09-5.548-1.893-7.992z" fill="#f5913a"/></svg>
<div style="position:absolute;left:152.5px;top:499.0px;height:37px;line-height:37px;font-family:'Liberation Sans',sans-serif;font-size:27.00px;font-weight:400;color:#fff;white-space:pre;letter-spacing:0.090px;-webkit-text-stroke:0.45px #fff;">ContentView</div>
<svg style="position:absolute;left:23.7px;top:1925.7px;" width="22.0" height="22.0" viewBox="0 0 22 22"><path d="M11 1.500v19M1.500 11h19" stroke="#e0e0e0" stroke-width="2.400" stroke-linecap="round"/></svg>
<div style="position:absolute;left:56.0px;top:1913.5px;width:478.0px;height:44.5px;background:#6a6a6a;border-radius:12px;box-sizing:border-box;border:1.5px solid #7a7a7a;"></div>
<svg style="position:absolute;left:65.0px;top:1923.0px;" width="53.0" height="26.0" viewBox="0 0 53 26"><rect x="1.200" y="1.200" width="50.600" height="23.600" rx="11.800" fill="none" stroke="#a9a9a9" stroke-width="2"/><path d="M10.500 8.500h13M12.500 13h9M14.800 17.500h4.400" stroke="#a9a9a9" stroke-width="2" stroke-linecap="round"/><path d="M32.500 11l4.200 4 4.200-4" fill="none" stroke="#d8d8d8" stroke-width="2.400" stroke-linecap="round" stroke-linejoin="round"/></svg>
<div style="position:absolute;left:124.5px;top:1918.5px;height:35px;line-height:35px;font-family:'Liberation Sans',sans-serif;font-size:25.00px;font-weight:400;color:#a2a2a2;white-space:pre;letter-spacing:-0.711px;-webkit-text-stroke:0.30px #a2a2a2;">Filter</div>
<svg style="position:absolute;left:461.5px;top:1923.0px;" width="26.0" height="26.0" viewBox="0 0 26 26"><circle cx="13" cy="13" r="11.500" fill="none" stroke="#e0e0e0" stroke-width="2"/><path d="M13 6v7.500H7.500" fill="none" stroke="#e0e0e0" stroke-width="2" stroke-linecap="round"/></svg>
<svg style="position:absolute;left:496.0px;top:1923.0px;" width="26.0" height="26.0" viewBox="0 0 26 26"><rect x="1" y="1" width="24" height="24" rx="2" fill="none" stroke="#e0e0e0" stroke-width="2"/><path d="M5.500 13h6M8.500 10v6M15 13h5.500" stroke="#e0e0e0" stroke-width="2"/></svg>
<div style="position:absolute;left:546.0px;top:265.0px;width:1685.0px;height:1644.0px;background:#1f1f24;"></div>
<div style="position:absolute;left:2200.0px;top:265.0px;width:30.0px;height:1644.0px;background:#2a2a2e;border-left:1.5px solid #37373b;"></div>
<div style="position:absolute;left:2208.0px;top:273.0px;width:16.0px;height:1325.5px;background:#98989b;border-radius:8px;"></div>
<div style="position:absolute;left:2230.0px;top:265.0px;width:2.0px;height:1644.0px;background:#000;"></div>
<div style="position:absolute;left:674.0px;top:268.0px;width:22.0px;height:295.0px;background:#38383d;border-radius:11px;"></div>
<div style="position:absolute;left:674.0px;top:718.0px;width:22.0px;height:544.0px;background:#38383d;border-radius:11px;"></div>
<div style="position:absolute;left:674.0px;top:768.0px;width:22.0px;height:445.0px;background:#48484d;border-radius:11px;box-shadow:0 -2.5px 0 0 #29292e,0 2.5px 0 0 #29292e;"></div>
<div style="position:absolute;left:674.0px;top:820.0px;width:22.0px;height:293.0px;background:#58585d;border-radius:11px;box-shadow:0 -2.5px 0 0 #2c2c31,0 2.5px 0 0 #2c2c31;"></div>
<div style="position:absolute;left:674.0px;top:1319.0px;width:22.0px;height:144.0px;background:#38383d;border-radius:11px;"></div>
<div style="position:absolute;left:888.0px;top:716.0px;width:258.3px;height:49.5px;background:#656e81;"></div>
<div style="position:absolute;right:2362.1px;text-align:right;top:266.3px;height:50px;line-height:50px;font-family:'Liberation Sans',sans-serif;font-size:33.00px;font-weight:400;color:#76767a;white-space:pre;-webkit-text-stroke:0.55px #76767a;transform:scaleY(1.09);transform-origin:50% 50%;">1</div>
<div style="position:absolute;left:723.6px;top:268.4px;height:50px;line-height:50px;font-family:'Liberation Mono',monospace;font-size:40.00px;letter-spacing:-0.514px;white-space:pre;"><span style="color:#7f8b97;-webkit-text-stroke:0.6px #7f8b97;">//</span></div>
<div style="position:absolute;right:2362.1px;text-align:right;top:316.3px;height:50px;line-height:50px;font-family:'Liberation Sans',sans-serif;font-size:33.00px;font-weight:400;color:#76767a;white-space:pre;-webkit-text-stroke:0.55px #76767a;transform:scaleY(1.09);transform-origin:50% 50%;">2</div>
<div style="position:absolute;left:723.6px;top:318.4px;height:50px;line-height:50px;font-family:'Liberation Mono',monospace;font-size:40.00px;letter-spacing:-0.514px;white-space:pre;"><span style="color:#7f8b97;-webkit-text-stroke:0.6px #7f8b97;">//  ContentView.swift</span></div>
<div style="position:absolute;right:2362.1px;text-align:right;top:366.3px;height:50px;line-height:50px;font-family:'Liberation Sans',sans-serif;font-size:33.00px;font-weight:400;color:#76767a;white-space:pre;-webkit-text-stroke:0.55px #76767a;transform:scaleY(1.09);transform-origin:50% 50%;">3</div>
<div style="position:absolute;left:723.6px;top:368.4px;height:50px;line-height:50px;font-family:'Liberation Mono',monospace;font-size:40.00px;letter-spacing:-0.514px;white-space:pre;"><span style="color:#7f8b97;-webkit-text-stroke:0.6px #7f8b97;">//  Clock</span></div>
<div style="position:absolute;right:2362.1px;text-align:right;top:416.3px;height:50px;line-height:50px;font-family:'Liberation Sans',sans-serif;font-size:33.00px;font-weight:400;color:#76767a;white-space:pre;-webkit-text-stroke:0.55px #76767a;transform:scaleY(1.09);transform-origin:50% 50%;">4</div>
<div style="position:absolute;left:723.6px;top:418.4px;height:50px;line-height:50px;font-family:'Liberation Mono',monospace;font-size:40.00px;letter-spacing:-0.514px;white-space:pre;"><span style="color:#7f8b97;-webkit-text-stroke:0.6px #7f8b97;">//</span></div>
<div style="position:absolute;right:2362.1px;text-align:right;top:466.3px;height:50px;line-height:50px;font-family:'Liberation Sans',sans-serif;font-size:33.00px;font-weight:400;color:#76767a;white-space:pre;-webkit-text-stroke:0.55px #76767a;transform:scaleY(1.09);transform-origin:50% 50%;">5</div>
<div style="position:absolute;left:723.6px;top:468.4px;height:50px;line-height:50px;font-family:'Liberation Mono',monospace;font-size:40.00px;letter-spacing:-0.514px;white-space:pre;"><span style="color:#7f8b97;-webkit-text-stroke:0.6px #7f8b97;">//  Created by Russell Gordon on 2024–11–08.</span></div>
<div style="position:absolute;right:2362.1px;text-align:right;top:516.3px;height:50px;line-height:50px;font-family:'Liberation Sans',sans-serif;font-size:33.00px;font-weight:400;color:#76767a;white-space:pre;-webkit-text-stroke:0.55px #76767a;transform:scaleY(1.09);transform-origin:50% 50%;">6</div>
<div style="position:absolute;left:723.6px;top:518.4px;height:50px;line-height:50px;font-family:'Liberation Mono',monospace;font-size:40.00px;letter-spacing:-0.514px;white-space:pre;"><span style="color:#7f8b97;-webkit-text-stroke:0.6px #7f8b97;">//</span></div>
<div style="position:absolute;right:2362.1px;text-align:right;top:566.3px;height:50px;line-height:50px;font-family:'Liberation Sans',sans-serif;font-size:33.00px;font-weight:400;color:#76767a;white-space:pre;-webkit-text-stroke:0.55px #76767a;transform:scaleY(1.09);transform-origin:50% 50%;">7</div>
<div style="position:absolute;right:2362.1px;text-align:right;top:616.3px;height:50px;line-height:50px;font-family:'Liberation Sans',sans-serif;font-size:33.00px;font-weight:400;color:#76767a;white-space:pre;-webkit-text-stroke:0.55px #76767a;transform:scaleY(1.09);transform-origin:50% 50%;">8</div>
<div style="position:absolute;left:723.6px;top:618.4px;height:50px;line-height:50px;font-family:'Liberation Mono',monospace;font-size:40.00px;letter-spacing:-0.514px;white-space:pre;"><span style="color:#e7559c;-webkit-text-stroke:0 #e7559c;font-weight:700;">import</span><span style="color:#ffffff;-webkit-text-stroke:0.6px #ffffff;"> SwiftUI</span></div>
<div style="position:absolute;right:2362.1px;text-align:right;top:666.3px;height:50px;line-height:50px;font-family:'Liberation Sans',sans-serif;font-size:33.00px;font-weight:400;color:#76767a;white-space:pre;-webkit-text-stroke:0.55px #76767a;transform:scaleY(1.09);transform-origin:50% 50%;">9</div>
<div style="position:absolute;right:2362.1px;text-align:right;top:716.3px;height:50px;line-height:50px;font-family:'Liberation Sans',sans-serif;font-size:33.00px;font-weight:400;color:#ffffff;white-space:pre;-webkit-text-stroke:0.55px #ffffff;transform:scaleY(1.09);transform-origin:50% 50%;">10</div>
<div style="position:absolute;left:723.6px;top:718.4px;height:50px;line-height:50px;font-family:'Liberation Mono',monospace;font-size:40.00px;letter-spacing:-0.514px;white-space:pre;"><span style="color:#e7559c;-webkit-text-stroke:0 #e7559c;font-weight:700;">struct</span><span style="color:#ffffff;-webkit-text-stroke:0.6px #ffffff;"> </span><span style="color:#83dcf8;-webkit-text-stroke:0.6px #83dcf8;">ContentView</span><span style="color:#ffffff;-webkit-text-stroke:0.6px #ffffff;">: </span><span style="color:#d9bbfa;-webkit-text-stroke:0.6px #d9bbfa;">View</span><span style="color:#ffffff;-webkit-text-stroke:0.6px #ffffff;"> {</span></div>
<div style="position:absolute;right:2362.1px;text-align:right;top:766.3px;height:50px;line-height:50px;font-family:'Liberation Sans',sans-serif;font-size:33.00px;font-weight:400;color:#76767a;white-space:pre;-webkit-text-stroke:0.55px #76767a;transform:scaleY(1.09);transform-origin:50% 50%;">11</div>
<div style="position:absolute;left:723.6px;top:768.4px;height:50px;line-height:50px;font-family:'Liberation Mono',monospace;font-size:40.00px;letter-spacing:-0.514px;white-space:pre;"><span style="color:#ffffff;-webkit-text-stroke:0.6px #ffffff;">    </span><span style="color:#e7559c;-webkit-text-stroke:0 #e7559c;font-weight:700;">var</span><span style="color:#ffffff;-webkit-text-stroke:0.6px #ffffff;"> </span><span style="color:#5fb6d6;-webkit-text-stroke:0.6px #5fb6d6;">body</span><span style="color:#ffffff;-webkit-text-stroke:0.6px #ffffff;">: </span><span style="color:#e7559c;-webkit-text-stroke:0 #e7559c;font-weight:700;">some</span><span style="color:#ffffff;-webkit-text-stroke:0.6px #ffffff;"> </span><span style="color:#d9bbfa;-webkit-text-stroke:0.6px #d9bbfa;">View</span><span style="color:#ffffff;-webkit-text-stroke:0.6px #ffffff;"> {</span></div>
<div style="position:absolute;right:2362.1px;text-align:right;top:816.3px;height:50px;line-height:50px;font-family:'Liberation Sans',sans-serif;font-size:33.00px;font-weight:400;color:#76767a;white-space:pre;-webkit-text-stroke:0.55px #76767a;transform:scaleY(1.09);transform-origin:50% 50%;">12</div>
<div style="position:absolute;left:723.6px;top:818.4px;height:50px;line-height:50px;font-family:'Liberation Mono',monospace;font-size:40.00px;letter-spacing:-0.514px;white-space:pre;"><span style="color:#ffffff;-webkit-text-stroke:0.6px #ffffff;">        </span><span style="color:#d9bbfa;-webkit-text-stroke:0.6px #d9bbfa;">VStack</span><span style="color:#ffffff;-webkit-text-stroke:0.6px #ffffff;"> {</span></div>
<div style="position:absolute;right:2362.1px;text-align:right;top:866.3px;height:50px;line-height:50px;font-family:'Liberation Sans',sans-serif;font-size:33.00px;font-weight:400;color:#76767a;white-space:pre;-webkit-text-stroke:0.55px #76767a;transform:scaleY(1.09);transform-origin:50% 50%;">13</div>
<div style="position:absolute;left:723.6px;top:868.4px;height:50px;line-height:50px;font-family:'Liberation Mono',monospace;font-size:40.00px;letter-spacing:-0.514px;white-space:pre;"><span style="color:#ffffff;-webkit-text-stroke:0.6px #ffffff;">            </span><span style="color:#d9bbfa;-webkit-text-stroke:0.6px #d9bbfa;">Image</span><span style="color:#ffffff;-webkit-text-stroke:0.6px #ffffff;">(systemName: </span><span style="color:#fc6a5d;-webkit-text-stroke:0.6px #fc6a5d;">"globe"</span><span style="color:#ffffff;-webkit-text-stroke:0.6px #ffffff;">)</span></div>
<div style="position:absolute;right:2362.1px;text-align:right;top:916.3px;height:50px;line-height:50px;font-family:'Liberation Sans',sans-serif;font-size:33.00px;font-weight:400;color:#76767a;white-space:pre;-webkit-text-stroke:0.55px #76767a;transform:scaleY(1.09);transform-origin:50% 50%;">14</div>
<div style="position:absolute;left:723.6px;top:918.4px;height:50px;line-height:50px;font-family:'Liberation Mono',monospace;font-size:40.00px;letter-spacing:-0.514px;white-space:pre;"><span style="color:#ffffff;-webkit-text-stroke:0.6px #ffffff;">                .</span><span style="color:#b380f2;-webkit-text-stroke:0.6px #b380f2;">imageScale</span><span style="color:#ffffff;-webkit-text-stroke:0.6px #ffffff;">(.</span><span style="color:#b380f2;-webkit-text-stroke:0.6px #b380f2;">large</span><span style="color:#ffffff;-webkit-text-stroke:0.6px #ffffff;">)</span></div>
<div style="position:absolute;right:2362.1px;text-align:right;top:966.3px;height:50px;line-height:50px;font-family:'Liberation Sans',sans-serif;font-size:33.00px;font-weight:400;color:#76767a;white-space:pre;-webkit-text-stroke:0.55px #76767a;transform:scaleY(1.09);transform-origin:50% 50%;">15</div>
<div style="position:absolute;left:723.6px;top:968.4px;height:50px;line-height:50px;font-family:'Liberation Mono',monospace;font-size:40.00px;letter-spacing:-0.514px;white-space:pre;"><span style="color:#ffffff;-webkit-text-stroke:0.6px #ffffff;">                .</span><span style="color:#b380f2;-webkit-text-stroke:0.6px #b380f2;">foregroundStyle</span><span style="color:#ffffff;-webkit-text-stroke:0.6px #ffffff;">(.</span><span style="color:#b380f2;-webkit-text-stroke:0.6px #b380f2;">tint</span><span style="color:#ffffff;-webkit-text-stroke:0.6px #ffffff;">)</span></div>
<div style="position:absolute;right:2362.1px;text-align:right;top:1016.3px;height:50px;line-height:50px;font-family:'Liberation Sans',sans-serif;font-size:33.00px;font-weight:400;color:#76767a;white-space:pre;-webkit-text-stroke:0.55px #76767a;transform:scaleY(1.09);transform-origin:50% 50%;">16</div>
<div style="position:absolute;left:723.6px;top:1018.4px;height:50px;line-height:50px;font-family:'Liberation Mono',monospace;font-size:40.00px;letter-spacing:-0.514px;white-space:pre;"><span style="color:#ffffff;-webkit-text-stroke:0.6px #ffffff;">            </span><span style="color:#d9bbfa;-webkit-text-stroke:0.6px #d9bbfa;">Text</span><span style="color:#ffffff;-webkit-text-stroke:0.6px #ffffff;">(</span><span style="color:#fc6a5d;-webkit-text-stroke:0.6px #fc6a5d;">"Hello, world!"</span><span style="color:#ffffff;-webkit-text-stroke:0.6px #ffffff;">)</span></div>
<div style="position:absolute;right:2362.1px;text-align:right;top:1066.3px;height:50px;line-height:50px;font-family:'Liberation Sans',sans-serif;font-size:33.00px;font-weight:400;color:#76767a;white-space:pre;-webkit-text-stroke:0.55px #76767a;transform:scaleY(1.09);transform-origin:50% 50%;">17</div>
<div style="position:absolute;left:723.6px;top:1068.4px;height:50px;line-height:50px;font-family:'Liberation Mono',monospace;font-size:40.00px;letter-spacing:-0.514px;white-space:pre;"><span style="color:#ffffff;-webkit-text-stroke:0.6px #ffffff;">        }</span></div>
<div style="position:absolute;right:2362.1px;text-align:right;top:1116.3px;height:50px;line-height:50px;font-family:'Liberation Sans',sans-serif;font-size:33.00px;font-weight:400;color:#76767a;white-space:pre;-webkit-text-stroke:0.55px #76767a;transform:scaleY(1.09);transform-origin:50% 50%;">18</div>
<div style="position:absolute;left:723.6px;top:1118.4px;height:50px;line-height:50px;font-family:'Liberation Mono',monospace;font-size:40.00px;letter-spacing:-0.514px;white-space:pre;"><span style="color:#ffffff;-webkit-text-stroke:0.6px #ffffff;">        .</span><span style="color:#b380f2;-webkit-text-stroke:0.6px #b380f2;">padding</span><span style="color:#ffffff;-webkit-text-stroke:0.6px #ffffff;">()</span></div>
<div style="position:absolute;right:2362.1px;text-align:right;top:1166.3px;height:50px;line-height:50px;font-family:'Liberation Sans',sans-serif;font-size:33.00px;font-weight:400;color:#76767a;white-space:pre;-webkit-text-stroke:0.55px #76767a;transform:scaleY(1.09);transform-origin:50% 50%;">19</div>
<div style="position:absolute;left:723.6px;top:1168.4px;height:50px;line-height:50px;font-family:'Liberation Mono',monospace;font-size:40.00px;letter-spacing:-0.514px;white-space:pre;"><span style="color:#ffffff;-webkit-text-stroke:0.6px #ffffff;">    }</span></div>
<div style="position:absolute;right:2362.1px;text-align:right;top:1216.3px;height:50px;line-height:50px;font-family:'Liberation Sans',sans-serif;font-size:33.00px;font-weight:400;color:#76767a;white-space:pre;-webkit-text-stroke:0.55px #76767a;transform:scaleY(1.09);transform-origin:50% 50%;">20</div>
<div style="position:absolute;left:723.6px;top:1218.4px;height:50px;line-height:50px;font-family:'Liberation Mono',monospace;font-size:40.00px;letter-spacing:-0.514px;white-space:pre;"><span style="color:#ffffff;-webkit-text-stroke:0.6px #ffffff;">}</span></div>
<div style="position:absolute;right:2362.1px;text-align:right;top:1266.3px;height:50px;line-height:50px;font-family:'Liberation Sans',sans-serif;font-size:33.00px;font-weight:400;color:#76767a;white-space:pre;-webkit-text-stroke:0.55px #76767a;transform:scaleY(1.09);transform-origin:50% 50%;">21</div>
<div style="position:absolute;right:2362.1px;text-align:right;top:1316.3px;height:50px;line-height:50px;font-family:'Liberation Sans',sans-serif;font-size:33.00px;font-weight:400;color:#76767a;white-space:pre;-webkit-text-stroke:0.55px #76767a;transform:scaleY(1.09);transform-origin:50% 50%;">22</div>
<div style="position:absolute;left:723.6px;top:1318.4px;height:50px;line-height:50px;font-family:'Liberation Mono',monospace;font-size:40.00px;letter-spacing:-0.514px;white-space:pre;"><span style="color:#b380f2;-webkit-text-stroke:0.6px #b380f2;">#Preview</span><span style="color:#ffffff;-webkit-text-stroke:0.6px #ffffff;"> {</span></div>
<div style="position:absolute;right:2362.1px;text-align:right;top:1366.3px;height:50px;line-height:50px;font-family:'Liberation Sans',sans-serif;font-size:33.00px;font-weight:400;color:#76767a;white-space:pre;-webkit-text-stroke:0.55px #76767a;transform:scaleY(1.09);transform-origin:50% 50%;">23</div>
<div style="position:absolute;left:723.6px;top:1368.4px;height:50px;line-height:50px;font-family:'Liberation Mono',monospace;font-size:40.00px;letter-spacing:-0.514px;white-space:pre;"><span style="color:#ffffff;-webkit-text-stroke:0.6px #ffffff;">    </span><span style="color:#b9f3e6;-webkit-text-stroke:0.6px #b9f3e6;">ContentView</span><span style="color:#ffffff;-webkit-text-stroke:0.6px #ffffff;">()</span></div>
<div style="position:absolute;right:2362.1px;text-align:right;top:1416.3px;height:50px;line-height:50px;font-family:'Liberation Sans',sans-serif;font-size:33.00px;font-weight:400;color:#76767a;white-space:pre;-webkit-text-stroke:0.55px #76767a;transform:scaleY(1.09);transform-origin:50% 50%;">24</div>
<div style="position:absolute;left:723.6px;top:1418.4px;height:50px;line-height:50px;font-family:'Liberation Mono',monospace;font-size:40.00px;letter-spacing:-0.514px;white-space:pre;"><span style="color:#ffffff;-webkit-text-stroke:0.6px #ffffff;">}</span></div>
<div style="position:absolute;right:2362.1px;text-align:right;top:1466.3px;height:50px;line-height:50px;font-family:'Liberation Sans',sans-serif;font-size:33.00px;font-weight:400;color:#76767a;white-space:pre;-webkit-text-stroke:0.55px #76767a;transform:scaleY(1.09);transform-origin:50% 50%;">25</div>
<div style="position:absolute;left:546.0px;top:1908.0px;width:2478.0px;height:2.0px;background:#050505;"></div>
<div style="position:absolute;left:546.0px;top:1910.0px;width:2478.0px;height:54.0px;background:#1e1e1e;"></div>
<svg style="position:absolute;left:568.5px;top:1927.5px;" width="31.0" height="19.5" viewBox="0 0 31 19.500"><path d="M4 0h17.500c1.200 0 2.200.500 3 1.400l5.600 6.500c.900 1 .900 2.600 0 3.700l-5.600 6.500c-.800.900-1.800 1.400-3 1.400H4c-2.200 0-4-1.800-4-4V4c0-2.200 1.800-4 4-4z" fill="#3478f6"/></svg>
<div style="position:absolute;left:2790.0px;top:1920.8px;height:32px;line-height:32px;font-family:'Liberation Sans',sans-serif;font-size:23.00px;font-weight:700;color:#9e9e9e;white-space:pre;letter-spacing:0.036px;">11 characters</div>
<div style="position:absolute;left:2954.3px;top:1925.0px;width:1.6px;height:24.0px;background:#383838;"></div>
<svg style="position:absolute;left:2972.5px;top:1924.0px;" width="27.0" height="26.0" viewBox="0 0 27 26"><rect x="1.300" y="1.300" width="24.400" height="23.400" rx="4.500" fill="none" stroke="#a6a6a6" stroke-width="2.200"/><rect x="5.500" y="15" width="16" height="6" rx="1.200" fill="#a6a6a6"/></svg>
<div style="position:absolute;left:2232.0px;top:265.0px;width:792.0px;height:1643.0px;background:#585c65;"></div>
<div style="position:absolute;left:2256.5px;top:290.0px;width:62.5px;height:51.5px;background:#363637;border-radius:11px;box-shadow:0 1px 3px rgba(0,0,0,.35);"></div>
<svg style="position:absolute;left:2276.0px;top:299.0px;" width="24.0" height="34.0" viewBox="0 0 24 34"><g fill="none" stroke="#f0f0f0" stroke-width="2.200" stroke-linecap="round" stroke-linejoin="round"><path d="M5.500 2.500h13"/><path d="M7.500 2.500v9.500c0 1-.5 1.800-1.400 2.400C4 15.800 2.500 17.500 2.500 20.500h19c0-3-1.500-4.700-3.600-6.100-.9-.6-1.400-1.400-1.400-2.400V2.500"/><path d="M12 20.500v10.500"/></g></svg>
<div style="position:absolute;left:2339.5px;top:290.0px;width:201.0px;height:51.5px;background:#6b80a8;border-radius:11px;box-shadow:0 1px 3px rgba(0,0,0,.3);"></div>
<svg style="position:absolute;left:2355.5px;top:302.0px;" width="24.0" height="25.0" viewBox="0 0 24 25"><g fill="none" stroke="#fff" stroke-width="1.900" stroke-linecap="round"><path d="M6.500 1.200h11"/><path d="M4.500 4.600h15"/><rect x="1.500" y="8" width="21" height="15.500" rx="3.500"/></g></svg>
<div style="position:absolute;left:2391.5px;top:299.5px;height:33px;line-height:33px;font-family:'Liberation Sans',sans-serif;font-size:23.60px;font-weight:400;color:#fff;white-space:pre;letter-spacing:-0.138px;-webkit-text-stroke:0.65px #fff;">ContentView</div>
<div style="position:absolute;left:2300.5px;top:655.0px;width:10.0px;height:46.0px;background:#2b2b2c;border-radius:3px;"></div>
<div style="position:absolute;left:2300.5px;top:745.0px;width:10.0px;height:91.0px;background:#2b2b2c;border-radius:3px;"></div>
<div style="position:absolute;left:2300.5px;top:862.0px;width:10.0px;height:91.0px;background:#2b2b2c;border-radius:3px;"></div>
<div style="position:absolute;left:2944.0px;top:806.0px;width:10.0px;height:144.0px;background:#2b2b2c;border-radius:3px;"></div>
<svg style="position:absolute;left:0;top:0" width="3024" height="1964" viewBox="0 0 3024 1964"><path d="M2309.7 563.9 L2310.3 534.0 L2312.3 515.0 L2315.5 499.1 L2320.0 485.1 L2325.7 472.8 L2332.8 461.9 L2341.1 452.3 L2350.7 444.0 L2361.6 436.9 L2373.9 431.2 L2387.9 426.7 L2403.8 423.5 L2422.8 421.5 L2452.7 420.9 L2803.3 420.9 L2833.2 421.5 L2852.2 423.5 L2868.1 426.7 L2882.1 431.2 L2894.4 436.9 L2905.3 444.0 L2914.9 452.3 L2923.2 461.9 L2930.3 472.8 L2936.0 485.1 L2940.5 499.1 L2943.7 515.0 L2945.7 534.0 L2946.3 563.9 L2946.3 1611.2 L2945.7 1641.1 L2943.7 1660.1 L2940.5 1676.0 L2936.0 1690.0 L2930.3 1702.3 L2923.2 1713.2 L2914.9 1722.8 L2905.3 1731.1 L2894.4 1738.2 L2882.1 1743.9 L2868.1 1748.4 L2852.2 1751.6 L2833.2 1753.6 L2803.3 1754.2 L2452.7 1754.2 L2422.8 1753.6 L2403.8 1751.6 L2387.9 1748.4 L2373.9 1743.9 L2361.6 1738.2 L2350.7 1731.1 L2341.1 1722.8 L2332.8 1713.2 L2325.7 1702.3 L2320.0 1690.0 L2315.5 1676.0 L2312.3 1660.1 L2310.3 1641.1 L2309.7 1611.2Z" fill="#2c2c2d" stroke="#8c8c8e" stroke-width="1.300"/><path d="M2318.0 563.7 L2318.6 535.7 L2320.4 517.9 L2323.4 503.0 L2327.6 489.9 L2333.0 478.3 L2339.6 468.1 L2347.4 459.1 L2356.4 451.3 L2366.6 444.7 L2378.2 439.3 L2391.3 435.1 L2406.2 432.1 L2424.0 430.3 L2452.0 429.7 L2805.0 429.7 L2833.0 430.3 L2850.8 432.1 L2865.7 435.1 L2878.8 439.3 L2890.4 444.7 L2900.6 451.3 L2909.6 459.1 L2917.4 468.1 L2924.0 478.3 L2929.4 489.9 L2933.6 503.0 L2936.6 517.9 L2938.4 535.7 L2939.0 563.7 L2939.0 1613.0 L2938.4 1641.0 L2936.6 1658.8 L2933.6 1673.7 L2929.4 1686.8 L2924.0 1698.4 L2917.4 1708.6 L2909.6 1717.6 L2900.6 1725.4 L2890.4 1732.0 L2878.8 1737.4 L2865.7 1741.6 L2850.8 1744.6 L2833.0 1746.4 L2805.0 1747.0 L2452.0 1747.0 L2424.0 1746.4 L2406.2 1744.6 L2391.3 1741.6 L2378.2 1737.4 L2366.6 1732.0 L2356.4 1725.4 L2347.4 1717.6 L2339.6 1708.6 L2333.0 1698.4 L2327.6 1686.8 L2323.4 1673.7 L2320.4 1658.8 L2318.6 1641.0 L2318.0 1613.0Z" fill="#000"/><path d="M2332.0 563.0 L2332.5 537.9 L2334.2 522.0 L2336.8 508.6 L2340.6 496.9 L2345.4 486.5 L2351.3 477.4 L2358.3 469.3 L2366.4 462.3 L2375.5 456.4 L2385.9 451.6 L2397.6 447.8 L2411.0 445.2 L2426.9 443.5 L2452.0 443.0 L2804.5 443.0 L2829.6 443.5 L2845.5 445.2 L2858.9 447.8 L2870.6 451.6 L2881.0 456.4 L2890.1 462.3 L2898.2 469.3 L2905.2 477.4 L2911.1 486.5 L2915.9 496.9 L2919.7 508.6 L2922.3 522.0 L2924.0 537.9 L2924.5 563.0 L2924.5 1611.0 L2924.0 1636.1 L2922.3 1652.0 L2919.7 1665.4 L2915.9 1677.1 L2911.1 1687.5 L2905.2 1696.6 L2898.2 1704.7 L2890.1 1711.7 L2881.0 1717.6 L2870.6 1722.4 L2858.9 1726.2 L2845.5 1728.8 L2829.6 1730.5 L2804.5 1731.0 L2452.0 1731.0 L2426.9 1730.5 L2411.0 1728.8 L2397.6 1726.2 L2385.9 1722.4 L2375.5 1717.6 L2366.4 1711.7 L2358.3 1704.7 L2351.3 1696.6 L2345.4 1687.5 L2340.6 1677.1 L2336.8 1665.4 L2334.2 1652.0 L2332.5 1636.1 L2332.0 1611.0Z" fill="#fff"/></svg>
<div style="position:absolute;left:2535.3px;top:462.9px;width:185.0px;height:55.0px;background:#000;border-radius:27.500px;"></div>
<svg style="position:absolute;left:2612.0px;top:1076.8px;" width="32.0" height="32.0" viewBox="0 0 32 32"><g fill="none" stroke="#3478f6" stroke-width="2.100"><circle cx="16" cy="16" r="14.800"/><ellipse cx="16" cy="16" rx="6.800" ry="14.800"/><path d="M16 1.200v29.600M1.200 16h29.600M3.600 8.500c3.500 1.700 7.700 2.500 12.400 2.500s8.900-.8 12.400-2.500M3.600 23.500c3.500-1.700 7.700-2.500 12.400-2.500s8.900.8 12.400 2.500"/></g></svg>
<div style="position:absolute;left:2559.0px;top:1110.0px;height:35px;line-height:35px;font-family:'Liberation Sans',sans-serif;font-size:25.00px;font-weight:400;color:#000;white-space:pre;letter-spacing:-0.004px;-webkit-text-stroke:0.10px #000;">Hello, world!</div>
<div style="position:absolute;left:2256.0px;top:1832.5px;width:163.0px;height:51.0px;background:#363637;border-radius:11px;box-shadow:0 1px 3px rgba(0,0,0,.35);"></div>
<div style="position:absolute;left:2439.0px;top:1832.5px;width:63.0px;height:51.0px;background:#363637;border-radius:11px;box-shadow:0 1px 3px rgba(0,0,0,.35);"></div>
<div style="position:absolute;left:2522.0px;top:1832.5px;width:53.0px;height:51.0px;background:#363637;border-radius:11px;box-shadow:0 1px 3px rgba(0,0,0,.35);"></div>
<div style="position:absolute;left:2793.0px;top:1832.5px;width:206.0px;height:51.0px;background:#363637;border-radius:11px;box-shadow:0 1px 3px rgba(0,0,0,.35);"></div>
<div style="position:absolute;left:2273.5px;top:1844.5px;width:27.0px;height:27.0px;background:#3478f6;border-radius:50%;"></div>
<svg style="position:absolute;left:2282.5px;top:1851.0px;" width="12.0" height="14.0" viewBox="0 0 12 14"><path d="M1 1.200v11.600c0 .7.700 1.100 1.300.7l9-5.800c.5-.3.5-1.100 0-1.400l-9-5.800C1.700.100 1 .500 1 1.200z" fill="#fff"/></svg>
<svg style="position:absolute;left:2321.5px;top:1845.5px;" width="25.0" height="25.0" viewBox="0 0 25 25"><rect x="1.200" y="1.200" width="22.600" height="22.600" rx="3.500" fill="none" stroke="#f0f0f0" stroke-width="2"/><path d="M8.500 5.500v12.500l3.200-2.800 2.300 5 2-.9-2.300-4.900 4.300-.2z" fill="#f0f0f0"/></svg>
<svg style="position:absolute;left:2375.5px;top:1847.5px;" width="24.0" height="21.0" viewBox="0 0 24 21"><rect x="1.0" y="1.0" width="5.200" height="7.500" rx="1" fill="none" stroke="#f0f0f0" stroke-width="1.600"/><rect x="9.4" y="1.0" width="5.200" height="7.500" rx="1" fill="none" stroke="#f0f0f0" stroke-width="1.600"/><rect x="17.8" y="1.0" width="5.200" height="7.500" rx="1" fill="none" stroke="#f0f0f0" stroke-width="1.600"/><rect x="1.0" y="12.0" width="5.200" height="7.500" rx="1" fill="none" stroke="#f0f0f0" stroke-width="1.600"/><rect x="9.4" y="12.0" width="5.200" height="7.500" rx="1" fill="none" stroke="#f0f0f0" stroke-width="1.600"/><rect x="17.8" y="12.0" width="5.200" height="7.500" rx="1" fill="none" stroke="#f0f0f0" stroke-width="1.600"/></svg>
<svg style="position:absolute;left:2457.5px;top:1845.5px;" width="26.0" height="25.0" viewBox="0 0 26 25"><rect x="1.200" y="1.200" width="23.600" height="10" rx="5" fill="none" stroke="#f0f0f0" stroke-width="2.200"/><circle cx="6.500" cy="6.200" r="2.500" fill="#f0f0f0"/><rect x="1.200" y="14" width="23.600" height="10" rx="5" fill="#f0f0f0"/><circle cx="19.500" cy="19" r="2.500" fill="#363637"/></svg>
<svg style="position:absolute;left:2541.5px;top:1845.5px;" width="15.0" height="25.0" viewBox="0 0 15 25"><rect x="1.200" y="1.200" width="12.600" height="22.600" rx="3" fill="#707072" stroke="#f0f0f0" stroke-width="2"/><path d="M5.500 3.800h4M5 21.300h5" stroke="#f0f0f0" stroke-width="1.300" stroke-linecap="round"/></svg>
<svg style="position:absolute;left:2809.5px;top:1845.0px;" width="27.0" height="27.0" viewBox="0 0 27 27"><circle cx="11" cy="11" r="8.800" fill="none" stroke="#f0f0f0" stroke-width="2.400"/><path d="M17.500 17.500 25 25" stroke="#f0f0f0" stroke-width="3" stroke-linecap="round"/><path d="M6.800 11h8.400" stroke="#f0f0f0" stroke-width="2.200" stroke-linecap="round"/></svg>
<svg style="position:absolute;left:2857.5px;top:1845.0px;" width="27.0" height="27.0" viewBox="0 0 27 27"><circle cx="11" cy="11" r="8.800" fill="none" stroke="#f0f0f0" stroke-width="2.400"/><path d="M17.500 17.500 25 25" stroke="#f0f0f0" stroke-width="3" stroke-linecap="round"/><path d="M9.300 8.300 11.300 7v8.500" fill="none" stroke="#f0f0f0" stroke-width="2" stroke-linecap="round" stroke-linejoin="round"/></svg>
<svg style="position:absolute;left:2905.5px;top:1845.0px;" width="27.0" height="27.0" viewBox="0 0 27 27"><circle cx="11" cy="11" r="8.800" fill="none" stroke="#c6c6c6" stroke-width="2.400"/><path d="M17.500 17.500 25 25" stroke="#c6c6c6" stroke-width="3" stroke-linecap="round"/><rect x="7.200" y="7.200" width="7.600" height="7.600" rx="1.500" fill="none" stroke="#c6c6c6" stroke-width="2"/></svg>
<svg style="position:absolute;left:2953.5px;top:1845.0px;" width="27.0" height="27.0" viewBox="0 0 27 27"><circle cx="11" cy="11" r="8.800" fill="none" stroke="#f0f0f0" stroke-width="2.400"/><path d="M17.500 17.500 25 25" stroke="#f0f0f0" stroke-width="3" stroke-linecap="round"/><path d="M6.800 11h8.400M11 6.800v8.400" stroke="#f0f0f0" stroke-width="2.200" stroke-linecap="round"/></svg>
</div></div>
<div id="edge"></div>
<div id="gs2" style="position:absolute;left:0;top:0;width:3024px;height:1964px;will-change:transform;">
<div style="position:absolute;left:1062.7px;top:741.0px;width:580.3px;height:919.5px;background:#323233;border-radius:13px;box-shadow:0 0 0 1.500px #5a5a5c, 0 0 0 2.500px rgba(0,0,0,.7), 0 14px 40px rgba(0,0,0,.45);"></div>
<div style="position:absolute;left:1072.0px;top:992.0px;width:560.0px;height:44.0px;background:#4b4b4c;border-radius:8px;"></div>
<div style="position:absolute;left:1090.5px;top:755.3px;height:37px;line-height:37px;font-family:'Liberation Sans',sans-serif;font-size:26.50px;font-weight:400;color:#e6e6e6;white-space:pre;letter-spacing:0.464px;-webkit-text-stroke:0.45px #e6e6e6;">Jump to Definition</div>
<div style="position:absolute;left:1090.5px;top:799.3px;height:37px;line-height:37px;font-family:'Liberation Sans',sans-serif;font-size:26.50px;font-weight:400;color:#e6e6e6;white-space:pre;letter-spacing:-0.122px;-webkit-text-stroke:0.45px #e6e6e6;">Show Callers...</div>
<div style="position:absolute;left:1090.5px;top:843.3px;height:37px;line-height:37px;font-family:'Liberation Sans',sans-serif;font-size:26.50px;font-weight:400;color:#e6e6e6;white-space:pre;letter-spacing:0.125px;-webkit-text-stroke:0.45px #e6e6e6;">Show Quick Help</div>
<div style="position:absolute;left:1090.5px;top:887.3px;height:37px;line-height:37px;font-family:'Liberation Sans',sans-serif;font-size:26.50px;font-weight:400;color:#e6e6e6;white-space:pre;letter-spacing:0.218px;-webkit-text-stroke:0.45px #e6e6e6;">Edit All in Scope</div>
<div style="position:absolute;left:1090.5px;top:931.3px;height:37px;line-height:37px;font-family:'Liberation Sans',sans-serif;font-size:26.50px;font-weight:400;color:#e6e6e6;white-space:pre;letter-spacing:0.115px;-webkit-text-stroke:0.45px #e6e6e6;">Create Code Snippet...</div>
<div style="position:absolute;left:1090.5px;top:996.8px;height:37px;line-height:37px;font-family:'Liberation Sans',sans-serif;font-size:26.50px;font-weight:400;color:#e6e6e6;white-space:pre;letter-spacing:0.264px;-webkit-text-stroke:0.45px #e6e6e6;">Refactor</div>
<div style="position:absolute;left:1090.5px;top:1040.8px;height:37px;line-height:37px;font-family:'Liberation Sans',sans-serif;font-size:26.50px;font-weight:400;color:#e6e6e6;white-space:pre;letter-spacing:-0.184px;-webkit-text-stroke:0.45px #e6e6e6;">Find</div>
<div style="position:absolute;left:1090.5px;top:1084.8px;height:37px;line-height:37px;font-family:'Liberation Sans',sans-serif;font-size:26.50px;font-weight:400;color:#e6e6e6;white-space:pre;letter-spacing:0.201px;-webkit-text-stroke:0.45px #e6e6e6;">Navigate</div>
<div style="position:absolute;left:1090.5px;top:1128.8px;height:37px;line-height:37px;font-family:'Liberation Sans',sans-serif;font-size:26.50px;font-weight:400;color:#e6e6e6;white-space:pre;letter-spacing:-0.184px;-webkit-text-stroke:0.45px #e6e6e6;">Fold</div>
<div style="position:absolute;left:1090.5px;top:1172.8px;height:37px;line-height:37px;font-family:'Liberation Sans',sans-serif;font-size:26.50px;font-weight:400;color:#e6e6e6;white-space:pre;letter-spacing:0.421px;-webkit-text-stroke:0.45px #e6e6e6;">Add Documentation</div>
<div style="position:absolute;left:1090.5px;top:1238.8px;height:37px;line-height:37px;font-family:'Liberation Sans',sans-serif;font-size:26.50px;font-weight:400;color:#e6e6e6;white-space:pre;letter-spacing:0.138px;-webkit-text-stroke:0.45px #e6e6e6;">Show Last Change for Line</div>
<div style="position:absolute;left:1090.5px;top:1305.1px;height:37px;line-height:37px;font-family:'Liberation Sans',sans-serif;font-size:26.50px;font-weight:400;color:#e6e6e6;white-space:pre;letter-spacing:0.435px;-webkit-text-stroke:0.45px #e6e6e6;">Bookmark “ContentView.swift” Line 10</div>
<div style="position:absolute;left:1090.5px;top:1349.1px;height:37px;line-height:37px;font-family:'Liberation Sans',sans-serif;font-size:26.50px;font-weight:400;color:#e6e6e6;white-space:pre;letter-spacing:0.593px;-webkit-text-stroke:0.45px #e6e6e6;">Bookmark “ContentView.swift”</div>
<div style="position:absolute;left:1090.5px;top:1415.3px;height:37px;line-height:37px;font-family:'Liberation Sans',sans-serif;font-size:26.50px;font-weight:400;color:#e6e6e6;white-space:pre;letter-spacing:0.131px;-webkit-text-stroke:0.45px #e6e6e6;">Cut</div>
<div style="position:absolute;left:1090.5px;top:1459.3px;height:37px;line-height:37px;font-family:'Liberation Sans',sans-serif;font-size:26.50px;font-weight:400;color:#e6e6e6;white-space:pre;letter-spacing:0.045px;-webkit-text-stroke:0.45px #e6e6e6;">Copy</div>
<div style="position:absolute;left:1090.5px;top:1503.3px;height:37px;line-height:37px;font-family:'Liberation Sans',sans-serif;font-size:26.50px;font-weight:400;color:#e6e6e6;white-space:pre;letter-spacing:-0.441px;-webkit-text-stroke:0.45px #e6e6e6;">Paste</div>
<div style="position:absolute;left:1090.5px;top:1568.8px;height:37px;line-height:37px;font-family:'Liberation Sans',sans-serif;font-size:26.50px;font-weight:400;color:#e6e6e6;white-space:pre;letter-spacing:0.019px;-webkit-text-stroke:0.45px #e6e6e6;">AutoFill</div>
<div style="position:absolute;left:1090.5px;top:1612.8px;height:37px;line-height:37px;font-family:'Liberation Sans',sans-serif;font-size:26.50px;font-weight:400;color:#e6e6e6;white-space:pre;letter-spacing:0.127px;-webkit-text-stroke:0.45px #e6e6e6;">Services</div>
<div style="position:absolute;left:1090.5px;top:980.0px;width:525.5px;height:2.0px;background:#515153;"></div>
<div style="position:absolute;left:1090.5px;top:1222.0px;width:525.5px;height:2.0px;background:#515153;"></div>
<div style="position:absolute;left:1090.5px;top:1288.0px;width:525.5px;height:2.0px;background:#515153;"></div>
<div style="position:absolute;left:1090.5px;top:1398.0px;width:525.5px;height:2.0px;background:#515153;"></div>
<div style="position:absolute;left:1090.5px;top:1552.0px;width:525.5px;height:2.0px;background:#515153;"></div>
<svg style="position:absolute;left:1600.0px;top:1003.5px;" width="14.0" height="22.0" viewBox="0 0 14 22"><path d="M3.500 3 11 11 3.500 19" fill="none" stroke="#e6e6e6" stroke-width="3.300" stroke-linecap="round" stroke-linejoin="round"/></svg>
<svg style="position:absolute;left:1600.0px;top:1047.5px;" width="14.0" height="22.0" viewBox="0 0 14 22"><path d="M3.500 3 11 11 3.500 19" fill="none" stroke="#e6e6e6" stroke-width="3.300" stroke-linecap="round" stroke-linejoin="round"/></svg>
<svg style="position:absolute;left:1600.0px;top:1091.5px;" width="14.0" height="22.0" viewBox="0 0 14 22"><path d="M3.500 3 11 11 3.500 19" fill="none" stroke="#e6e6e6" stroke-width="3.300" stroke-linecap="round" stroke-linejoin="round"/></svg>
<svg style="position:absolute;left:1600.0px;top:1466.0px;" width="14.0" height="22.0" viewBox="0 0 14 22"><path d="M3.500 3 11 11 3.500 19" fill="none" stroke="#e6e6e6" stroke-width="3.300" stroke-linecap="round" stroke-linejoin="round"/></svg>
<svg style="position:absolute;left:1600.0px;top:1575.5px;" width="14.0" height="22.0" viewBox="0 0 14 22"><path d="M3.500 3 11 11 3.500 19" fill="none" stroke="#e6e6e6" stroke-width="3.300" stroke-linecap="round" stroke-linejoin="round"/></svg>
<svg style="position:absolute;left:1600.0px;top:1619.5px;" width="14.0" height="22.0" viewBox="0 0 14 22"><path d="M3.500 3 11 11 3.500 19" fill="none" stroke="#e6e6e6" stroke-width="3.300" stroke-linecap="round" stroke-linejoin="round"/></svg>
<div style="position:absolute;left:1634.5px;top:983.0px;width:516.8px;height:700.0px;background:#323233;border-radius:13px;box-shadow:0 0 0 1.500px #5a5a5c, 0 0 0 2.500px rgba(0,0,0,.7), 0 14px 40px rgba(0,0,0,.45);"></div>
<div style="position:absolute;left:1644.0px;top:992.0px;width:498.0px;height:43.5px;background:#2450cd;border-radius:8px;"></div>
<div style="position:absolute;left:1662.7px;top:996.8px;height:37px;line-height:37px;font-family:'Liberation Sans',sans-serif;font-size:26.50px;font-weight:400;color:#fff;white-space:pre;letter-spacing:-0.657px;-webkit-text-stroke:0.30px #fff;">Rename...</div>
<div style="position:absolute;left:1662.7px;top:1040.9px;height:37px;line-height:37px;font-family:'Liberation Sans',sans-serif;font-size:26.50px;font-weight:400;color:#efefef;white-space:pre;letter-spacing:0.286px;-webkit-text-stroke:0.30px #efefef;">Extract to File</div>
<div style="position:absolute;left:1662.7px;top:1084.9px;height:37px;line-height:37px;font-family:'Liberation Sans',sans-serif;font-size:26.50px;font-weight:400;color:#707072;white-space:pre;letter-spacing:0.421px;-webkit-text-stroke:0.30px #707072;">Extract to Function</div>
<div style="position:absolute;left:1662.7px;top:1129.0px;height:37px;line-height:37px;font-family:'Liberation Sans',sans-serif;font-size:26.50px;font-weight:400;color:#707072;white-space:pre;letter-spacing:0.551px;-webkit-text-stroke:0.30px #707072;">Extract to Method</div>
<div style="position:absolute;left:1662.7px;top:1173.0px;height:37px;line-height:37px;font-family:'Liberation Sans',sans-serif;font-size:26.50px;font-weight:400;color:#707072;white-space:pre;letter-spacing:0.358px;-webkit-text-stroke:0.30px #707072;">Extract to Variable</div>
<div style="position:absolute;left:1662.7px;top:1217.1px;height:37px;line-height:37px;font-family:'Liberation Sans',sans-serif;font-size:26.50px;font-weight:400;color:#707072;white-space:pre;letter-spacing:0.414px;-webkit-text-stroke:0.30px #707072;">Extract All Occurrences</div>
<div style="position:absolute;left:1662.7px;top:1283.1px;height:37px;line-height:37px;font-family:'Liberation Sans',sans-serif;font-size:26.50px;font-weight:400;color:#707072;white-space:pre;letter-spacing:0.349px;-webkit-text-stroke:0.30px #707072;">Add Missing Abstract Class Overrides</div>
<div style="position:absolute;left:1662.7px;top:1327.2px;height:37px;line-height:37px;font-family:'Liberation Sans',sans-serif;font-size:26.50px;font-weight:400;color:#707072;white-space:pre;letter-spacing:0.242px;-webkit-text-stroke:0.30px #707072;">Add Missing Protocol Requirements</div>
<div style="position:absolute;left:1662.7px;top:1371.2px;height:37px;line-height:37px;font-family:'Liberation Sans',sans-serif;font-size:26.50px;font-weight:400;color:#707072;white-space:pre;letter-spacing:0.186px;-webkit-text-stroke:0.30px #707072;">Add Missing Switch Cases</div>
<div style="position:absolute;left:1662.7px;top:1415.3px;height:37px;line-height:37px;font-family:'Liberation Sans',sans-serif;font-size:26.50px;font-weight:400;color:#707072;white-space:pre;letter-spacing:0.427px;-webkit-text-stroke:0.30px #707072;">Convert to Switch</div>
<div style="position:absolute;left:1662.7px;top:1459.3px;height:37px;line-height:37px;font-family:'Liberation Sans',sans-serif;font-size:26.50px;font-weight:400;color:#707072;white-space:pre;letter-spacing:0.171px;-webkit-text-stroke:0.30px #707072;">Convert to Regex Builder</div>
<div style="position:absolute;left:1662.7px;top:1503.3px;height:37px;line-height:37px;font-family:'Liberation Sans',sans-serif;font-size:26.50px;font-weight:400;color:#707072;white-space:pre;letter-spacing:0.138px;-webkit-text-stroke:0.30px #707072;">Expand Default</div>
<div style="position:absolute;left:1662.7px;top:1547.3px;height:37px;line-height:37px;font-family:'Liberation Sans',sans-serif;font-size:26.50px;font-weight:400;color:#707072;white-space:pre;letter-spacing:0.251px;-webkit-text-stroke:0.30px #707072;">Generate Memberwise Initializer</div>
<div style="position:absolute;left:1662.7px;top:1591.3px;height:37px;line-height:37px;font-family:'Liberation Sans',sans-serif;font-size:26.50px;font-weight:400;color:#707072;white-space:pre;letter-spacing:0.312px;-webkit-text-stroke:0.30px #707072;">Generate Missing Function Definitions</div>
<div style="position:absolute;left:1662.7px;top:1635.0px;height:37px;line-height:37px;font-family:'Liberation Sans',sans-serif;font-size:26.50px;font-weight:400;color:#707072;white-space:pre;letter-spacing:0.180px;-webkit-text-stroke:0.30px #707072;">Wrap in NSLocalizedString</div>
<div style="position:absolute;left:1662.7px;top:1266.0px;width:461.5px;height:2.0px;background:#515153;"></div>
</div>
</body></html>
